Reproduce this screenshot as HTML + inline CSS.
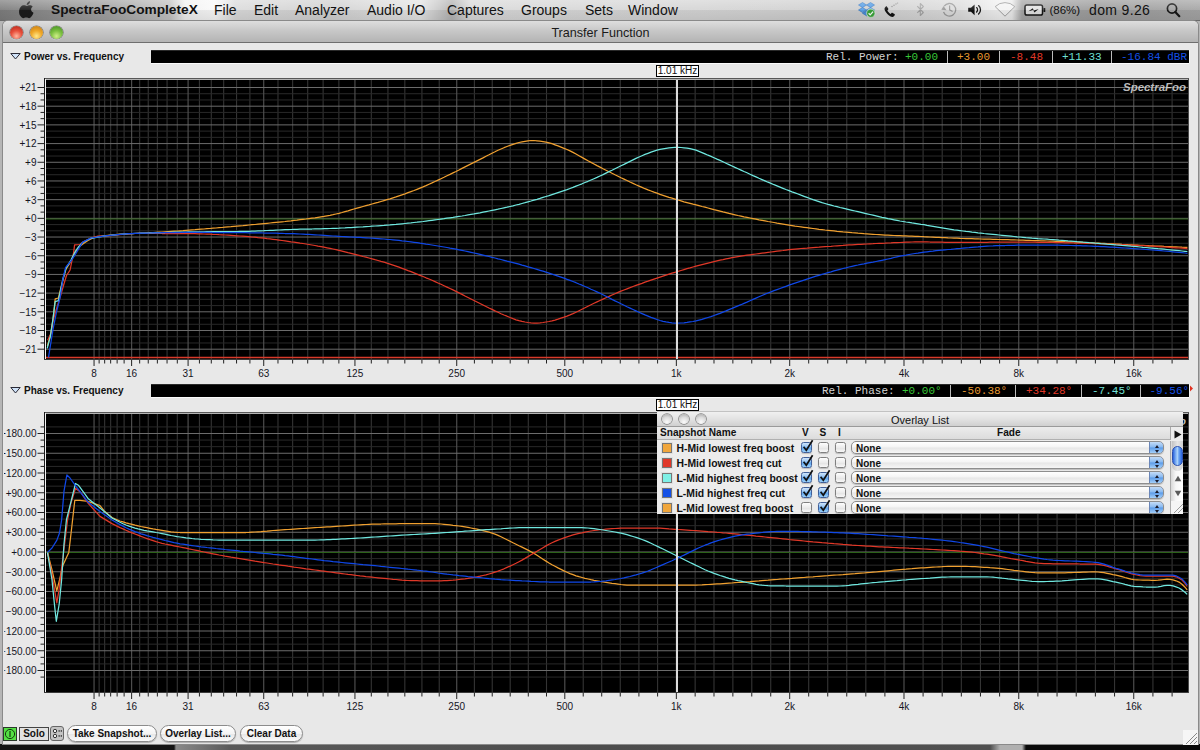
<!DOCTYPE html>
<html lang="en"><head><meta charset="utf-8"><title>Transfer Function</title>
<style>
html,body{margin:0;padding:0}
body{width:1200px;height:750px;position:relative;overflow:hidden;background:linear-gradient(90deg,#141414 0,#141414 174px,#8a8a8a 176px,#5a5a5a 230px,#4c4c4c 600px,#505050 990px,#b0b0b0 1000px,#b0b0b0 1022px,#0a0a0a 1026px,#0a0a0a 1200px);font-family:"Liberation Sans","DejaVu Sans",sans-serif;color:#111;-webkit-font-smoothing:antialiased}
div,span{position:absolute;box-sizing:border-box;white-space:nowrap}
svg{position:absolute;display:block}
.desk{left:0;top:0;width:1200px;height:744px;background:#b6b6b6}
.menubar{left:0;top:0;width:1200px;height:21px;background:linear-gradient(90deg,#7e7e7e 0,#8c8c8c 40px,#a4a4a4 110px,#c4c4c4 170px,#f2f2f2 185px,#fafafa 215px,#dcdcdc 235px,#d2d2d2 330px,#e6e6e6 420px,#c8c8c8 440px,#b4b4b4 452px,#dadada 470px,#d6d6d6 700px,#cfcfcf 860px,#dedede 960px,#f2f2f2 1000px,#ececec 1012px,#a8a8a8 1022px,#9e9e9e 1100px,#a6a6a6 1200px);border-bottom:1px solid #6a6a6a}
.menubar:after{content:"";position:absolute;left:0;top:0;width:100%;height:20px;background:linear-gradient(180deg,rgba(255,255,255,.28),rgba(255,255,255,.05) 50%,rgba(0,0,0,.06) 52%,rgba(0,0,0,.10))}
.mi{top:1px;font-size:14px;line-height:18px;color:#111;z-index:2}
.win{left:3px;top:21px;width:1195px;height:723px;background:#e8e8e8;border-radius:5px 5px 0 0;box-shadow:0 0 0 1px #8a8a8a}
.tbar{left:0;top:0;width:1195px;height:22px;border-radius:5px 5px 0 0;background:linear-gradient(180deg,#dedede 0,#c8c8c8 45%,#b4b4b4 100%);border-bottom:1px solid #6e6e6e}
.title{left:0;width:1195px;top:5px;text-align:center;font-size:12.6px;line-height:15px;color:#1a1a1a}
.tl{top:5px;width:13px;height:13px;border-radius:50%;box-shadow:0 0 0 .6px rgba(0,0,0,.45),0 1px 1px rgba(255,255,255,.6)}
.sec{font-size:10px;font-weight:bold;line-height:12px;color:#111}
.bar{left:151px;width:1038px;height:13px;background:#000;box-shadow:0 1px 0 #fbfbfb,1px 0 0 #f4f4f4;border-top:1px solid #2a2a2a}
.ro{font-family:"Liberation Mono","DejaVu Sans Mono",monospace;font-size:11px;line-height:13px;top:0}
.sep{top:0;width:1px;height:12px;background:#bcbcbc}
.plot{}
.ylc{left:4px;top:44px;width:32.500px;height:690px;overflow:hidden}
.yl{right:0;text-align:right;font-size:10px;line-height:13px;color:#15151f}
.xl{width:40px;text-align:center;font-size:10px;line-height:12px;color:#15151f}
.cur{left:656px;width:43px;height:12px;background:#fff;border:1px solid #000;font-size:10px;line-height:10px;text-align:center;color:#111}
.pill{top:725px;height:17px;border:1px solid #8c8c8c;border-radius:9px;background:linear-gradient(180deg,#fff 0,#f4f4f4 50%,#e6e6e6 52%,#fbfbfb 100%);font-size:10px;font-weight:bold;line-height:15px;text-align:center;color:#111;box-shadow:0 1px 1px rgba(0,0,0,.25)}

.ov{left:657px;top:411px;width:526px;height:103px;background:#ececec;overflow:hidden}
.ovt{left:0;top:0;width:526px;height:16px;background:linear-gradient(180deg,#f0f0f0,#e2e2e2 50%,#d0d0d0);border-bottom:1px solid #9a9a9a;border-top:1px solid #c2c2c2}
.ovt i{top:1.700px;width:10px;height:10px;border-radius:50%;background:radial-gradient(circle at 50% 80%,#fbfbfb,#dcdcdc 50%,#a0a0a0);box-shadow:0 0 0 .8px #808080;position:absolute}
.ovtt{left:0;width:526px;top:1px;text-align:center;font-size:11px;line-height:14px;color:#111}
.ovh{left:0;top:16px;width:526px;height:13px;background:linear-gradient(180deg,#ececec,#dcdcdc);border-bottom:1px solid #b0b0b0;font-size:10.100px;font-weight:bold;line-height:12px}
.ovh span{top:0}
.ovhb{left:513px;top:0;width:13px;height:13px;background:#ececec;border-left:1px solid #aaa}
.sw{left:4.500px;width:10px;height:10px;border:1px solid #777;box-shadow:0 0 0 1px #e0e0e0}
.rn{left:19.500px;font-size:10.400px;font-weight:bold;line-height:13px;color:#111}
.cb{width:11px;height:11px;border:1px solid #808080;border-radius:2.500px;background:linear-gradient(180deg,#fdfdfd,#ececec 50%,#e2e2e2 52%,#f8f8f8);box-shadow:0 1px 1px rgba(0,0,0,.2)}
.cb.on{border-color:#40609a;background:linear-gradient(180deg,#cfe4fa,#8cc0f4 48%,#5aa2ec 52%,#9ad0fa)}
.pop{left:194px;width:312.700px;height:13px;border:1px solid #8e8e8e;border-radius:5px;background:linear-gradient(180deg,#fff,#f4f4f4 48%,#e6e6e6 52%,#f6f6f6);box-shadow:0 1px 1px rgba(0,0,0,.2);font-size:10px;font-weight:bold;line-height:11px;overflow:hidden}
.pop span{left:4px;top:.700px}
.popc{right:-1px;top:-1px;width:15px;height:13px;border-radius:0 5px 5px 0;background:linear-gradient(180deg,#c4dcf8,#86b8f0 48%,#5a9ae8 52%,#a4d0fa);border:1px solid #6a86b8}
.sb{left:513px;top:30px;width:13px;height:73px;background:linear-gradient(90deg,#d8d8d8,#f6f6f6 40%,#fff);border-left:1px solid #aaa}
.sbtr{left:1px;top:0;width:11px;height:30px;border-radius:0 0 5.500px 5.500px;background:linear-gradient(90deg,#c4c4c4,#e4e4e4 50%,#d0d0d0)}
.sbth{left:1px;top:5px;width:11px;height:20px;border-radius:5.500px;background:linear-gradient(90deg,#2a62dc,#86b8f6 35%,#a8d0fa 50%,#6aa4f2 65%,#2a62dc);border:1px solid #2a50b0}
</style></head><body>
<div class="desk"></div>
<div class="menubar">
<svg style="left:19px;top:1px" width="16" height="19" viewBox="0 0 15 17.800"><path d="M10.4 0.2c.1 1-.3 1.900-.9 2.600-.6.700-1.500 1.200-2.400 1.100-.1-.9.300-1.900.9-2.500.6-.700 1.600-1.200 2.400-1.200zM13.600 12.300c-.4.900-.6 1.300-1.100 2.100-.7 1.100-1.700 2.500-3 2.500-1.100 0-1.400-.7-2.900-.7-1.500 0-1.900.7-3 .7-1.300 0-2.200-1.200-2.900-2.300C-1.300 11.600-.5 7.300 1.300 5.600c.9-.9 2-1.400 3.100-1.400 1.200 0 1.900.7 2.900.7.900 0 1.500-.7 2.900-.7 1 0 2 .5 2.800 1.400-2.400 1.400-2 4.900.6 5.700z" fill="#1c1c1c" transform="translate(.5,0) scale(.95)"/></svg>
<span class="mi" style="left:51px;font-weight:bold;font-size:13.7px">SpectraFooCompleteX</span>
<span class="mi" style="left:214px">File</span>
<span class="mi" style="left:254px">Edit</span>
<span class="mi" style="left:295px">Analyzer</span>
<span class="mi" style="left:367px">Audio I/O</span>
<span class="mi" style="left:447px">Captures</span>
<span class="mi" style="left:521px">Groups</span>
<span class="mi" style="left:585px">Sets</span>
<span class="mi" style="left:628px">Window</span>
<span class="mi" style="left:1049.500px;font-size:11.500px">(86%)</span>
<span class="mi" style="left:1089px;letter-spacing:.35px">dom 9.26</span>
<svg style="left:856px;top:0" width="350" height="21" viewBox="856 0 350 21">
<!-- dropbox -->
<g stroke="#2a6fc0" stroke-width=".6" fill="#5aa0e6">
<path d="M862.500 2.500l4 2.500-4 2.500-4-2.500z"/><path d="M870.500 2.500l4 2.500-4 2.500-4-2.500z"/>
<path d="M858.500 10l4-2.500 4 2.500-4 2.500z"/><path d="M866.500 10l4-2.500 4 2.500-4 2.500z"/>
<path d="M862.500 13.300l4-2.500 4 2.500-4 2.500z" fill="#4a90dc"/>
</g>
<circle cx="870.800" cy="13.200" r="4.200" fill="#3aa63a" stroke="#e8f4e8" stroke-width=".7"/>
<path d="M868.600 13.200l1.600 1.700 2.900-3.300" fill="none" stroke="#fff" stroke-width="1.300"/>
<!-- phone -->
<path d="M885.200 7.200c-.9.800-.9 2.200.1 4 1.200 2.100 3.200 4.300 5.300 5.300 1.500.7 2.600.5 3.300-.3l.8-1c.3-.4.200-.8-.2-1.100l-1.900-1.200c-.4-.2-.8-.2-1.100.2l-.7.800c-1.300-.6-2.800-2.100-3.500-3.500l.8-.7c.3-.3.400-.7.100-1.100l-1.200-1.900c-.3-.4-.7-.5-1.100-.2z" fill="#111"/>
<g fill="#8a8a8a"><circle cx="892" cy="6.500" r=".7"/><circle cx="894" cy="5.200" r=".7"/><circle cx="896" cy="3.900" r=".7"/><circle cx="897.600" cy="3" r=".6"/></g>
<!-- bluetooth -->
<path d="M917.300 6.200l6 6.300-3 3v-12l3 3-6 6.300" fill="none" stroke="#a4a4a4" stroke-width="1.100" stroke-linejoin="round"/>
<!-- time machine -->
<g fill="none" stroke="#9a9a9a" stroke-width="1.300"><path d="M944.200 6.200a6.300 6.300 0 1 1 -.7 5.800"/><path d="M949.600 5.500v4.300l3 1.700" stroke-width="1.200"/></g>
<path d="M941.300 9.800l5.200.4-2.900 -4.200z" fill="#9a9a9a"/>
<!-- volume -->
<path d="M968.200 7.800h2.800l3.600-3.400v10.800l-3.600-3.400h-2.800z" fill="#111"/>
<g fill="none" stroke="#111" stroke-width="1.300" stroke-linecap="round"><path d="M976.600 7.600a3 3 0 0 1 0 4.400"/><path d="M978.600 5.600a5.600 5.600 0 0 1 0 8.400"/></g>
<!-- wifi -->
<path d="M1005 16.200l-9.800-9.600a14 14 0 0 1 19.600 0z" fill="#f4f4f4" stroke="#a0a0a0" stroke-width="1" stroke-linejoin="round"/>
<!-- battery -->
<rect x="1025" y="5" width="17.500" height="10" rx="1.800" fill="#e4e4e4" stroke="#161616" stroke-width="1.500"/>
<rect x="1043.500" y="8" width="1.800" height="4" rx=".6" fill="#161616"/>
<path d="M1028.500 11.200l4.200-3 1.200 2.200 4.800-1.400-4.300 3.400-1.200-2.300z" fill="#161616"/>
<!-- spotlight -->
<circle cx="1172" cy="8.500" r="4.600" fill="none" stroke="#161616" stroke-width="1.700"/>
<path d="M1175.300 12l4 4.200" stroke="#161616" stroke-width="2.200" stroke-linecap="round"/>
</svg>

</div>
<div class="win">
 <div class="tbar">
  <div class="tl" style="left:7.300px;background:radial-gradient(circle at 50% 78%,#ffb8a0 0,#e8503c 45%,#b02418 100%)"></div>
  <div class="tl" style="left:27px;background:radial-gradient(circle at 50% 78%,#ffe88a 0,#f0a828 45%,#c07810 100%)"></div>
  <div class="tl" style="left:46.800px;background:radial-gradient(circle at 50% 78%,#d0f088 0,#7cc040 45%,#3c8820 100%)"></div>
  <div class="title">Transfer Function</div>
 </div>
</div>

<!-- section 1 header -->
<svg style="left:9px;top:52px" width="13" height="9" viewBox="0 0 13 9"><path d="M1.800 1.500H11.200L6.500 7z" fill="#cfe2f8" stroke="#2a2a36" stroke-width="1" stroke-linejoin="round"/></svg>
<div class="sec" style="left:24px;top:51px">Power vs. Frequency</div>
<div class="bar" style="top:50px">
 <span class="ro" style="left:675px;color:#d4d4d4">Rel. Power:</span>
 <span class="ro" style="left:754px;color:#38c838">+0.00</span>
 <span class="sep" style="left:796px"></span>
 <span class="ro" style="left:806px;color:#e89a30">+3.00</span>
 <span class="sep" style="left:848px"></span>
 <span class="ro" style="left:859px;color:#e03828">-8.48</span>
 <span class="sep" style="left:901px"></span>
 <span class="ro" style="left:911px;color:#70e0d8">+11.33</span>
 <span class="sep" style="left:960px"></span>
 <span class="ro" style="left:970px;color:#1450e8">-16.84 dBR</span>
</div>
<div class="cur" style="top:65px">1.01 kHz</div>

<!-- section 2 header -->
<svg style="left:9px;top:386px" width="13" height="9" viewBox="0 0 13 9"><path d="M1.800 1.500H11.200L6.500 7z" fill="#cfe2f8" stroke="#2a2a36" stroke-width="1" stroke-linejoin="round"/></svg>
<div class="sec" style="left:24px;top:385px">Phase vs. Frequency</div>
<div class="bar" style="top:384px;overflow:hidden">
 <span class="ro" style="left:671px;color:#d4d4d4">Rel. Phase:</span>
 <span class="ro" style="left:751px;color:#38c838">+0.00°</span>
 <span class="sep" style="left:799px"></span>
 <span class="ro" style="left:810px;color:#e89a30">-50.38°</span>
 <span class="sep" style="left:864px"></span>
 <span class="ro" style="left:875px;color:#e03828">+34.28°</span>
 <span class="sep" style="left:930px"></span>
 <span class="ro" style="left:941px;color:#70e0d8">-7.45°</span>
 <span class="sep" style="left:989px"></span>
 <span class="ro" style="left:998.500px;color:#1450e8">-9.56°</span>
</div>
<div class="cur" style="top:399px">1.01 kHz</div>
<svg style="left:1190px;top:385px" width="4" height="7" viewBox="0 0 4 7"><path d="M0 .5L3 3.500 0 6.500z" fill="#e03020"/></svg>

<svg class="plot" style="left:44px;top:78px" width="1145" height="282" viewBox="44 78 1145 282">
<rect x="44" y="78" width="1145" height="282" fill="#000"/>
<g stroke="#343434" stroke-width="1.1">
<line x1="99.13" y1="78" x2="99.13" y2="360"/>
<line x1="104.66" y1="78" x2="104.66" y2="360"/>
<line x1="110.65" y1="78" x2="110.65" y2="360"/>
<line x1="117.13" y1="78" x2="117.13" y2="360"/>
<line x1="124.11" y1="78" x2="124.11" y2="360"/>
<line x1="139.66" y1="78" x2="139.66" y2="360"/>
<line x1="148.24" y1="78" x2="148.24" y2="360"/>
<line x1="157.37" y1="78" x2="157.37" y2="360"/>
<line x1="167.06" y1="78" x2="167.06" y2="360"/>
<line x1="177.30" y1="78" x2="177.30" y2="360"/>
<line x1="199.43" y1="78" x2="199.43" y2="360"/>
<line x1="211.29" y1="78" x2="211.29" y2="360"/>
<line x1="223.67" y1="78" x2="223.67" y2="360"/>
<line x1="236.55" y1="78" x2="236.55" y2="360"/>
<line x1="249.91" y1="78" x2="249.91" y2="360"/>
<line x1="277.98" y1="78" x2="277.98" y2="360"/>
<line x1="292.64" y1="78" x2="292.64" y2="360"/>
<line x1="307.70" y1="78" x2="307.70" y2="360"/>
<line x1="323.12" y1="78" x2="323.12" y2="360"/>
<line x1="338.87" y1="78" x2="338.87" y2="360"/>
<line x1="371.31" y1="78" x2="371.31" y2="360"/>
<line x1="387.94" y1="78" x2="387.94" y2="360"/>
<line x1="404.82" y1="78" x2="404.82" y2="360"/>
<line x1="421.92" y1="78" x2="421.92" y2="360"/>
<line x1="439.23" y1="78" x2="439.23" y2="360"/>
<line x1="474.40" y1="78" x2="474.40" y2="360"/>
<line x1="492.23" y1="78" x2="492.23" y2="360"/>
<line x1="510.20" y1="78" x2="510.20" y2="360"/>
<line x1="528.29" y1="78" x2="528.29" y2="360"/>
<line x1="546.50" y1="78" x2="546.50" y2="360"/>
<line x1="583.22" y1="78" x2="583.22" y2="360"/>
<line x1="601.71" y1="78" x2="601.71" y2="360"/>
<line x1="620.27" y1="78" x2="620.27" y2="360"/>
<line x1="638.91" y1="78" x2="638.91" y2="360"/>
<line x1="657.60" y1="78" x2="657.60" y2="360"/>
<line x1="695.15" y1="78" x2="695.15" y2="360"/>
<line x1="713.99" y1="78" x2="713.99" y2="360"/>
<line x1="732.87" y1="78" x2="732.87" y2="360"/>
<line x1="751.78" y1="78" x2="751.78" y2="360"/>
<line x1="770.73" y1="78" x2="770.73" y2="360"/>
<line x1="808.70" y1="78" x2="808.70" y2="360"/>
<line x1="827.72" y1="78" x2="827.72" y2="360"/>
<line x1="846.76" y1="78" x2="846.76" y2="360"/>
<line x1="865.82" y1="78" x2="865.82" y2="360"/>
<line x1="884.90" y1="78" x2="884.90" y2="360"/>
<line x1="923.09" y1="78" x2="923.09" y2="360"/>
<line x1="942.20" y1="78" x2="942.20" y2="360"/>
<line x1="961.33" y1="78" x2="961.33" y2="360"/>
<line x1="980.46" y1="78" x2="980.46" y2="360"/>
<line x1="999.60" y1="78" x2="999.60" y2="360"/>
<line x1="1037.90" y1="78" x2="1037.90" y2="360"/>
<line x1="1057.06" y1="78" x2="1057.06" y2="360"/>
<line x1="1076.22" y1="78" x2="1076.22" y2="360"/>
<line x1="1095.39" y1="78" x2="1095.39" y2="360"/>
<line x1="1114.56" y1="78" x2="1114.56" y2="360"/>
<line x1="1152.92" y1="78" x2="1152.92" y2="360"/>
<line x1="1172.10" y1="78" x2="1172.10" y2="360"/>
</g><g stroke="#292929" stroke-width="1">
<line x1="44" y1="342.97" x2="1189" y2="342.97"/>
<line x1="44" y1="336.74" x2="1189" y2="336.74"/>
<line x1="44" y1="324.28" x2="1189" y2="324.28"/>
<line x1="44" y1="318.05" x2="1189" y2="318.05"/>
<line x1="44" y1="305.58" x2="1189" y2="305.58"/>
<line x1="44" y1="299.35" x2="1189" y2="299.35"/>
<line x1="44" y1="286.89" x2="1189" y2="286.89"/>
<line x1="44" y1="280.66" x2="1189" y2="280.66"/>
<line x1="44" y1="268.20" x2="1189" y2="268.20"/>
<line x1="44" y1="261.97" x2="1189" y2="261.97"/>
<line x1="44" y1="249.50" x2="1189" y2="249.50"/>
<line x1="44" y1="243.27" x2="1189" y2="243.27"/>
<line x1="44" y1="230.81" x2="1189" y2="230.81"/>
<line x1="44" y1="224.58" x2="1189" y2="224.58"/>
<line x1="44" y1="212.12" x2="1189" y2="212.12"/>
<line x1="44" y1="205.89" x2="1189" y2="205.89"/>
<line x1="44" y1="193.43" x2="1189" y2="193.43"/>
<line x1="44" y1="187.19" x2="1189" y2="187.19"/>
<line x1="44" y1="174.73" x2="1189" y2="174.73"/>
<line x1="44" y1="168.50" x2="1189" y2="168.50"/>
<line x1="44" y1="156.04" x2="1189" y2="156.04"/>
<line x1="44" y1="149.81" x2="1189" y2="149.81"/>
<line x1="44" y1="137.35" x2="1189" y2="137.35"/>
<line x1="44" y1="131.12" x2="1189" y2="131.12"/>
<line x1="44" y1="118.65" x2="1189" y2="118.65"/>
<line x1="44" y1="112.42" x2="1189" y2="112.42"/>
<line x1="44" y1="99.96" x2="1189" y2="99.96"/>
<line x1="44" y1="93.73" x2="1189" y2="93.73"/>
</g><g stroke="#505050" stroke-width="1.15">
<line x1="94.05" y1="78" x2="94.05" y2="360"/>
<line x1="131.62" y1="78" x2="131.62" y2="360"/>
<line x1="188.09" y1="78" x2="188.09" y2="360"/>
<line x1="263.72" y1="78" x2="263.72" y2="360"/>
<line x1="354.94" y1="78" x2="354.94" y2="360"/>
<line x1="456.73" y1="78" x2="456.73" y2="360"/>
<line x1="564.81" y1="78" x2="564.81" y2="360"/>
<line x1="676.35" y1="78" x2="676.35" y2="360"/>
<line x1="789.70" y1="78" x2="789.70" y2="360"/>
<line x1="903.99" y1="78" x2="903.99" y2="360"/>
<line x1="1018.75" y1="78" x2="1018.75" y2="360"/>
<line x1="1133.74" y1="78" x2="1133.74" y2="360"/>
</g><g stroke="#6c6c6c" stroke-width="1">
<line x1="44" y1="349.20" x2="1189" y2="349.20"/>
<line x1="44" y1="330.51" x2="1189" y2="330.51"/>
<line x1="44" y1="311.81" x2="1189" y2="311.81"/>
<line x1="44" y1="293.12" x2="1189" y2="293.12"/>
<line x1="44" y1="274.43" x2="1189" y2="274.43"/>
<line x1="44" y1="255.74" x2="1189" y2="255.74"/>
<line x1="44" y1="237.04" x2="1189" y2="237.04"/>
<line x1="44" y1="218.35" x2="1189" y2="218.35"/>
<line x1="44" y1="199.66" x2="1189" y2="199.66"/>
<line x1="44" y1="180.96" x2="1189" y2="180.96"/>
<line x1="44" y1="162.27" x2="1189" y2="162.27"/>
<line x1="44" y1="143.58" x2="1189" y2="143.58"/>
<line x1="44" y1="124.89" x2="1189" y2="124.89"/>
<line x1="44" y1="106.19" x2="1189" y2="106.19"/>
<line x1="44" y1="87.50" x2="1189" y2="87.50"/>
</g>
<line x1="44" y1="219.0" x2="1189" y2="219.0" stroke="#2c6219" stroke-width="1"/>
<line x1="44" y1="357.5" x2="1189" y2="357.5" stroke="#d83a2a" stroke-width="1.4"/><text x="1186" y="90.5" text-anchor="end" font-family='"Liberation Sans", "DejaVu Sans", sans-serif' font-size="10.5" font-weight="bold" font-style="italic" fill="#d4d4d4" fill-opacity=".88" letter-spacing="0" textLength="63" lengthAdjust="spacingAndGlyphs">SpectraFoo</text>
<g fill="none" stroke-width="1.25" stroke-linejoin="round">
<path d="M47.4,346.0 L50.5,335.0 L53.0,319.5 L55.2,298.9 L58.4,298.0 L61.1,287.0 L63.2,279.0 L66.0,269.0 L71.0,261.5 L75.0,253.0 L79.0,247.0 L83.5,243.5 L88.0,240.5 L94.5,237.2 L105.3,235.5 L120.0,234.1 L123.0,234.0 L126.0,233.8 L129.0,233.7 L132.0,233.6 L135.0,233.5 L138.0,233.3 L141.0,233.2 L144.0,233.1 L147.0,232.9 L150.0,232.7 L153.0,232.6 L156.0,232.4 L159.0,232.2 L162.0,232.0 L165.0,231.8 L168.0,231.6 L171.0,231.4 L174.0,231.2 L177.0,231.0 L180.0,230.8 L183.0,230.6 L186.0,230.3 L189.0,230.1 L192.0,229.9 L195.0,229.7 L198.0,229.4 L201.0,229.2 L204.0,229.0 L207.0,228.7 L210.0,228.5 L213.0,228.2 L216.0,228.0 L219.0,227.7 L222.0,227.5 L225.0,227.2 L228.0,226.9 L231.0,226.7 L234.0,226.4 L237.0,226.1 L240.0,225.8 L243.0,225.6 L246.0,225.3 L249.0,225.0 L252.0,224.7 L255.0,224.5 L258.0,224.2 L261.0,223.9 L264.0,223.6 L267.0,223.3 L270.0,223.0 L273.0,222.7 L276.0,222.4 L279.0,222.1 L282.0,221.8 L285.0,221.5 L288.0,221.1 L291.0,220.8 L294.0,220.4 L297.0,220.1 L300.0,219.7 L303.0,219.3 L306.0,219.0 L309.0,218.6 L312.0,218.2 L315.0,217.8 L318.0,217.3 L321.0,216.8 L324.0,216.4 L327.0,215.8 L330.0,215.3 L333.0,214.7 L336.0,214.0 L339.0,213.3 L342.0,212.5 L345.0,211.6 L348.0,210.8 L351.0,209.9 L354.0,209.0 L357.0,208.1 L360.0,207.3 L363.0,206.5 L366.0,205.7 L369.0,204.9 L372.0,204.0 L375.0,203.2 L378.0,202.4 L381.0,201.5 L384.0,200.6 L387.0,199.7 L390.0,198.8 L393.0,197.8 L396.0,196.9 L399.0,195.8 L402.0,194.8 L405.0,193.8 L408.0,192.7 L411.0,191.6 L414.0,190.5 L417.0,189.3 L420.0,188.1 L423.0,186.9 L426.0,185.6 L429.0,184.2 L432.0,182.9 L435.0,181.5 L438.0,180.1 L441.0,178.7 L444.0,177.3 L447.0,175.8 L450.0,174.4 L453.0,172.9 L456.0,171.5 L459.0,170.0 L462.0,168.4 L465.0,166.9 L468.0,165.4 L471.0,163.9 L474.0,162.4 L477.0,160.9 L480.0,159.4 L483.0,157.9 L486.0,156.3 L489.0,154.8 L492.0,153.2 L495.0,151.8 L498.0,150.3 L501.0,149.0 L504.0,147.7 L507.0,146.5 L510.0,145.4 L513.0,144.3 L516.0,143.3 L519.0,142.5 L522.0,141.9 L525.0,141.3 L528.0,140.8 L531.0,140.5 L534.0,140.5 L537.0,140.8 L540.0,141.2 L543.0,141.7 L546.0,142.2 L549.0,142.9 L552.0,143.7 L555.0,144.8 L558.0,145.9 L561.0,147.1 L564.0,148.3 L567.0,149.5 L570.0,150.9 L573.0,152.4 L576.0,154.0 L579.0,155.7 L582.0,157.4 L585.0,159.1 L588.0,160.8 L591.0,162.4 L594.0,164.0 L597.0,165.6 L600.0,167.1 L603.0,168.7 L606.0,170.2 L609.0,171.7 L612.0,173.3 L615.0,174.8 L618.0,176.2 L621.0,177.7 L624.0,179.1 L627.0,180.5 L630.0,182.0 L633.0,183.4 L636.0,184.8 L639.0,186.1 L642.0,187.4 L645.0,188.7 L648.0,189.9 L651.0,191.0 L654.0,192.2 L657.0,193.2 L660.0,194.3 L663.0,195.3 L666.0,196.3 L669.0,197.3 L672.0,198.2 L675.0,199.1 L678.0,200.0 L681.0,200.9 L684.0,201.8 L687.0,202.6 L690.0,203.4 L693.0,204.2 L696.0,204.9 L699.0,205.7 L702.0,206.5 L705.0,207.2 L708.0,208.0 L711.0,208.8 L714.0,209.6 L717.0,210.3 L720.0,211.1 L723.0,211.9 L726.0,212.6 L729.0,213.4 L732.0,214.1 L735.0,214.8 L738.0,215.5 L741.0,216.1 L744.0,216.8 L747.0,217.4 L750.0,218.0 L753.0,218.6 L756.0,219.2 L759.0,219.8 L762.0,220.3 L765.0,220.9 L768.0,221.5 L771.0,222.0 L774.0,222.5 L777.0,223.1 L780.0,223.6 L783.0,224.1 L786.0,224.6 L789.0,225.1 L792.0,225.6 L795.0,226.1 L798.0,226.5 L801.0,226.9 L804.0,227.3 L807.0,227.7 L810.0,228.1 L813.0,228.5 L816.0,228.9 L819.0,229.3 L822.0,229.6 L825.0,230.0 L828.0,230.3 L831.0,230.6 L834.0,230.9 L837.0,231.3 L840.0,231.6 L843.0,231.9 L846.0,232.1 L849.0,232.4 L852.0,232.7 L855.0,232.9 L858.0,233.2 L861.0,233.4 L864.0,233.7 L867.0,233.9 L870.0,234.1 L873.0,234.3 L876.0,234.5 L879.0,234.7 L882.0,234.9 L885.0,235.1 L888.0,235.2 L891.0,235.3 L894.0,235.5 L897.0,235.6 L900.0,235.7 L903.0,235.8 L906.0,235.9 L909.0,236.1 L912.0,236.2 L915.0,236.3 L918.0,236.4 L921.0,236.5 L924.0,236.7 L927.0,236.8 L930.0,237.0 L933.0,237.1 L936.0,237.3 L939.0,237.4 L942.0,237.6 L945.0,237.7 L948.0,237.9 L951.0,238.0 L954.0,238.1 L957.0,238.2 L960.0,238.4 L963.0,238.5 L966.0,238.6 L969.0,238.6 L972.0,238.7 L975.0,238.8 L978.0,238.9 L981.0,239.0 L984.0,239.1 L987.0,239.2 L990.0,239.2 L993.0,239.3 L996.0,239.4 L999.0,239.5 L1002.0,239.6 L1005.0,239.6 L1008.0,239.7 L1011.0,239.8 L1014.0,239.9 L1017.0,240.0 L1020.0,240.1 L1023.0,240.2 L1026.0,240.3 L1029.0,240.4 L1032.0,240.5 L1035.0,240.6 L1038.0,240.7 L1041.0,240.8 L1044.0,240.9 L1047.0,241.0 L1050.0,241.1 L1053.0,241.2 L1056.0,241.3 L1059.0,241.4 L1062.0,241.5 L1065.0,241.7 L1068.0,241.8 L1071.0,241.9 L1074.0,242.0 L1077.0,242.1 L1080.0,242.3 L1083.0,242.4 L1086.0,242.5 L1089.0,242.7 L1092.0,242.8 L1095.0,243.0 L1098.0,243.1 L1101.0,243.3 L1104.0,243.4 L1107.0,243.6 L1110.0,243.8 L1113.0,243.9 L1116.0,244.1 L1119.0,244.2 L1122.0,244.4 L1125.0,244.5 L1128.0,244.7 L1131.0,244.8 L1134.0,245.0 L1137.0,245.1 L1140.0,245.3 L1143.0,245.4 L1146.0,245.5 L1149.0,245.7 L1152.0,245.8 L1155.0,246.0 L1158.0,246.1 L1161.0,246.2 L1164.0,246.4 L1167.0,246.5 L1170.0,246.6 L1173.0,246.8 L1176.0,246.9 L1179.0,247.0 L1182.0,247.2 L1185.0,247.3 L1187.4,247.4" stroke="#f0a030"/>
<path d="M47.6,340.3 L51.2,333.0 L53.0,320.5 L55.7,311.5 L60.2,297.0 L63.8,284.5 L66.5,275.5 L70.1,270.0 L73.7,252.0 L74.6,244.8 L80.0,244.5 L82.7,242.1 L90.8,238.2 L98.0,236.0 L105.3,236.2 L120.0,234.6 L123.0,234.3 L126.0,234.1 L129.0,233.9 L132.0,233.7 L135.0,233.5 L138.0,233.4 L141.0,233.4 L144.0,233.4 L147.0,233.4 L150.0,233.4 L153.0,233.4 L156.0,233.4 L159.0,233.4 L162.0,233.5 L165.0,233.5 L168.0,233.5 L171.0,233.5 L174.0,233.5 L177.0,233.6 L180.0,233.6 L183.0,233.6 L186.0,233.6 L189.0,233.7 L192.0,233.7 L195.0,233.7 L198.0,233.8 L201.0,233.9 L204.0,234.0 L207.0,234.1 L210.0,234.2 L213.0,234.4 L216.0,234.5 L219.0,234.7 L222.0,234.8 L225.0,235.0 L228.0,235.2 L231.0,235.4 L234.0,235.6 L237.0,235.8 L240.0,236.0 L243.0,236.2 L246.0,236.4 L249.0,236.7 L252.0,237.0 L255.0,237.2 L258.0,237.6 L261.0,237.9 L264.0,238.2 L267.0,238.6 L270.0,238.9 L273.0,239.3 L276.0,239.7 L279.0,240.1 L282.0,240.5 L285.0,240.9 L288.0,241.3 L291.0,241.8 L294.0,242.2 L297.0,242.6 L300.0,243.1 L303.0,243.5 L306.0,244.0 L309.0,244.5 L312.0,245.0 L315.0,245.5 L318.0,246.1 L321.0,246.6 L324.0,247.2 L327.0,247.8 L330.0,248.4 L333.0,249.0 L336.0,249.7 L339.0,250.4 L342.0,251.1 L345.0,251.8 L348.0,252.6 L351.0,253.3 L354.0,254.1 L357.0,254.9 L360.0,255.7 L363.0,256.5 L366.0,257.2 L369.0,258.0 L372.0,258.8 L375.0,259.7 L378.0,260.5 L381.0,261.4 L384.0,262.2 L387.0,263.2 L390.0,264.1 L393.0,265.1 L396.0,266.1 L399.0,267.2 L402.0,268.3 L405.0,269.4 L408.0,270.6 L411.0,271.7 L414.0,272.9 L417.0,274.1 L420.0,275.3 L423.0,276.5 L426.0,277.8 L429.0,279.0 L432.0,280.3 L435.0,281.6 L438.0,283.0 L441.0,284.3 L444.0,285.7 L447.0,287.1 L450.0,288.5 L453.0,289.9 L456.0,291.4 L459.0,292.9 L462.0,294.4 L465.0,296.0 L468.0,297.5 L471.0,299.0 L474.0,300.5 L477.0,302.0 L480.0,303.5 L483.0,305.0 L486.0,306.5 L489.0,308.0 L492.0,309.4 L495.0,310.9 L498.0,312.3 L501.0,313.7 L504.0,315.0 L507.0,316.2 L510.0,317.5 L513.0,318.7 L516.0,319.8 L519.0,320.7 L522.0,321.4 L525.0,322.0 L528.0,322.5 L531.0,322.9 L534.0,323.2 L537.0,323.2 L540.0,322.9 L543.0,322.5 L546.0,322.0 L549.0,321.5 L552.0,320.9 L555.0,320.1 L558.0,319.2 L561.0,318.2 L564.0,317.2 L567.0,316.1 L570.0,314.9 L573.0,313.6 L576.0,312.2 L579.0,310.7 L582.0,309.2 L585.0,307.7 L588.0,306.2 L591.0,304.7 L594.0,303.3 L597.0,301.9 L600.0,300.5 L603.0,299.1 L606.0,297.7 L609.0,296.4 L612.0,295.0 L615.0,293.7 L618.0,292.4 L621.0,291.2 L624.0,290.0 L627.0,288.8 L630.0,287.7 L633.0,286.5 L636.0,285.4 L639.0,284.3 L642.0,283.3 L645.0,282.2 L648.0,281.2 L651.0,280.1 L654.0,279.1 L657.0,278.1 L660.0,277.1 L663.0,276.1 L666.0,275.1 L669.0,274.1 L672.0,273.2 L675.0,272.3 L678.0,271.4 L681.0,270.5 L684.0,269.6 L687.0,268.7 L690.0,267.9 L693.0,267.0 L696.0,266.2 L699.0,265.4 L702.0,264.6 L705.0,263.8 L708.0,263.1 L711.0,262.4 L714.0,261.6 L717.0,260.9 L720.0,260.2 L723.0,259.6 L726.0,258.9 L729.0,258.3 L732.0,257.7 L735.0,257.1 L738.0,256.6 L741.0,256.1 L744.0,255.6 L747.0,255.2 L750.0,254.8 L753.0,254.4 L756.0,254.0 L759.0,253.6 L762.0,253.2 L765.0,252.8 L768.0,252.4 L771.0,252.0 L774.0,251.6 L777.0,251.2 L780.0,250.8 L783.0,250.5 L786.0,250.1 L789.0,249.7 L792.0,249.4 L795.0,249.1 L798.0,248.8 L801.0,248.5 L804.0,248.3 L807.0,248.1 L810.0,247.8 L813.0,247.6 L816.0,247.4 L819.0,247.2 L822.0,246.9 L825.0,246.7 L828.0,246.5 L831.0,246.3 L834.0,246.0 L837.0,245.8 L840.0,245.6 L843.0,245.4 L846.0,245.1 L849.0,244.9 L852.0,244.8 L855.0,244.6 L858.0,244.4 L861.0,244.3 L864.0,244.1 L867.0,244.0 L870.0,243.8 L873.0,243.7 L876.0,243.5 L879.0,243.4 L882.0,243.3 L885.0,243.2 L888.0,243.0 L891.0,242.9 L894.0,242.7 L897.0,242.6 L900.0,242.5 L903.0,242.3 L906.0,242.2 L909.0,242.1 L912.0,242.0 L915.0,241.9 L918.0,241.9 L921.0,241.9 L924.0,241.9 L927.0,241.9 L930.0,242.0 L933.0,242.0 L936.0,242.1 L939.0,242.1 L942.0,242.2 L945.0,242.3 L948.0,242.3 L951.0,242.3 L954.0,242.4 L957.0,242.4 L960.0,242.4 L963.0,242.4 L966.0,242.4 L969.0,242.4 L972.0,242.4 L975.0,242.3 L978.0,242.3 L981.0,242.3 L984.0,242.3 L987.0,242.3 L990.0,242.2 L993.0,242.2 L996.0,242.2 L999.0,242.2 L1002.0,242.2 L1005.0,242.1 L1008.0,242.1 L1011.0,242.1 L1014.0,242.1 L1017.0,242.1 L1020.0,242.1 L1023.0,242.1 L1026.0,242.1 L1029.0,242.2 L1032.0,242.2 L1035.0,242.2 L1038.0,242.3 L1041.0,242.3 L1044.0,242.3 L1047.0,242.4 L1050.0,242.4 L1053.0,242.5 L1056.0,242.6 L1059.0,242.6 L1062.0,242.7 L1065.0,242.8 L1068.0,242.8 L1071.0,242.9 L1074.0,243.0 L1077.0,243.0 L1080.0,243.1 L1083.0,243.2 L1086.0,243.3 L1089.0,243.4 L1092.0,243.5 L1095.0,243.6 L1098.0,243.7 L1101.0,243.8 L1104.0,243.9 L1107.0,244.0 L1110.0,244.2 L1113.0,244.3 L1116.0,244.4 L1119.0,244.6 L1122.0,244.7 L1125.0,244.8 L1128.0,245.0 L1131.0,245.1 L1134.0,245.3 L1137.0,245.4 L1140.0,245.6 L1143.0,245.7 L1146.0,245.9 L1149.0,246.1 L1152.0,246.2 L1155.0,246.4 L1158.0,246.6 L1161.0,246.8 L1164.0,247.0 L1167.0,247.2 L1170.0,247.4 L1173.0,247.6 L1176.0,247.8 L1179.0,248.0 L1182.0,248.2 L1185.0,248.4 L1187.4,248.6" stroke="#e03828"/>
<path d="M47.2,348.4 L50.3,336.7 L53.0,318.7 L55.2,301.6 L58.4,300.7 L61.1,288.0 L62.9,279.0 L66.0,268.0 L71.0,260.0 L75.5,251.0 L78.0,247.5 L82.7,242.5 L90.8,238.3 L105.3,235.8 L120.0,234.3 L123.0,234.1 L126.0,233.9 L129.0,233.7 L132.0,233.6 L135.0,233.4 L138.0,233.3 L141.0,233.2 L144.0,233.1 L147.0,233.0 L150.0,232.9 L153.0,232.8 L156.0,232.7 L159.0,232.6 L162.0,232.5 L165.0,232.5 L168.0,232.4 L171.0,232.3 L174.0,232.2 L177.0,232.2 L180.0,232.1 L183.0,232.0 L186.0,232.0 L189.0,231.9 L192.0,231.9 L195.0,231.9 L198.0,231.8 L201.0,231.8 L204.0,231.8 L207.0,231.7 L210.0,231.7 L213.0,231.7 L216.0,231.7 L219.0,231.6 L222.0,231.6 L225.0,231.6 L228.0,231.6 L231.0,231.5 L234.0,231.5 L237.0,231.5 L240.0,231.4 L243.0,231.4 L246.0,231.3 L249.0,231.3 L252.0,231.2 L255.0,231.1 L258.0,230.9 L261.0,230.8 L264.0,230.7 L267.0,230.5 L270.0,230.4 L273.0,230.3 L276.0,230.1 L279.0,230.0 L282.0,229.8 L285.0,229.7 L288.0,229.6 L291.0,229.5 L294.0,229.4 L297.0,229.3 L300.0,229.2 L303.0,229.2 L306.0,229.1 L309.0,229.0 L312.0,229.0 L315.0,228.9 L318.0,228.8 L321.0,228.8 L324.0,228.7 L327.0,228.6 L330.0,228.5 L333.0,228.4 L336.0,228.3 L339.0,228.2 L342.0,228.0 L345.0,227.9 L348.0,227.7 L351.0,227.6 L354.0,227.4 L357.0,227.2 L360.0,227.0 L363.0,226.9 L366.0,226.7 L369.0,226.5 L372.0,226.2 L375.0,226.0 L378.0,225.8 L381.0,225.6 L384.0,225.4 L387.0,225.1 L390.0,224.9 L393.0,224.6 L396.0,224.4 L399.0,224.1 L402.0,223.8 L405.0,223.5 L408.0,223.2 L411.0,222.9 L414.0,222.5 L417.0,222.2 L420.0,221.8 L423.0,221.5 L426.0,221.1 L429.0,220.7 L432.0,220.3 L435.0,219.9 L438.0,219.5 L441.0,219.1 L444.0,218.7 L447.0,218.2 L450.0,217.8 L453.0,217.4 L456.0,216.9 L459.0,216.4 L462.0,216.0 L465.0,215.5 L468.0,214.9 L471.0,214.4 L474.0,213.9 L477.0,213.3 L480.0,212.8 L483.0,212.2 L486.0,211.6 L489.0,211.0 L492.0,210.4 L495.0,209.8 L498.0,209.2 L501.0,208.5 L504.0,207.8 L507.0,207.2 L510.0,206.5 L513.0,205.8 L516.0,205.0 L519.0,204.3 L522.0,203.5 L525.0,202.7 L528.0,201.8 L531.0,201.0 L534.0,200.1 L537.0,199.3 L540.0,198.4 L543.0,197.4 L546.0,196.5 L549.0,195.6 L552.0,194.6 L555.0,193.6 L558.0,192.6 L561.0,191.6 L564.0,190.6 L567.0,189.6 L570.0,188.5 L573.0,187.4 L576.0,186.2 L579.0,185.0 L582.0,183.8 L585.0,182.5 L588.0,181.3 L591.0,180.0 L594.0,178.7 L597.0,177.4 L600.0,176.0 L603.0,174.6 L606.0,173.1 L609.0,171.6 L612.0,170.2 L615.0,168.7 L618.0,167.2 L621.0,165.8 L624.0,164.4 L627.0,162.9 L630.0,161.4 L633.0,159.9 L636.0,158.4 L639.0,157.0 L642.0,155.7 L645.0,154.4 L648.0,153.3 L651.0,152.2 L654.0,151.2 L657.0,150.2 L660.0,149.4 L663.0,148.8 L666.0,148.3 L669.0,147.9 L672.0,147.6 L675.0,147.4 L678.0,147.3 L681.0,147.5 L684.0,147.8 L687.0,148.2 L690.0,148.7 L693.0,149.3 L696.0,150.2 L699.0,151.4 L702.0,152.6 L705.0,153.9 L708.0,155.2 L711.0,156.4 L714.0,157.7 L717.0,159.1 L720.0,160.4 L723.0,161.8 L726.0,163.2 L729.0,164.6 L732.0,166.0 L735.0,167.4 L738.0,168.7 L741.0,170.1 L744.0,171.5 L747.0,172.8 L750.0,174.2 L753.0,175.6 L756.0,176.9 L759.0,178.3 L762.0,179.6 L765.0,180.9 L768.0,182.2 L771.0,183.4 L774.0,184.7 L777.0,185.9 L780.0,187.1 L783.0,188.3 L786.0,189.5 L789.0,190.6 L792.0,191.8 L795.0,192.9 L798.0,194.0 L801.0,195.2 L804.0,196.3 L807.0,197.4 L810.0,198.5 L813.0,199.6 L816.0,200.6 L819.0,201.6 L822.0,202.6 L825.0,203.5 L828.0,204.4 L831.0,205.2 L834.0,206.0 L837.0,206.7 L840.0,207.5 L843.0,208.2 L846.0,208.9 L849.0,209.6 L852.0,210.3 L855.0,211.0 L858.0,211.7 L861.0,212.4 L864.0,213.1 L867.0,213.8 L870.0,214.5 L873.0,215.2 L876.0,215.9 L879.0,216.6 L882.0,217.3 L885.0,217.9 L888.0,218.6 L891.0,219.2 L894.0,219.8 L897.0,220.4 L900.0,221.0 L903.0,221.5 L906.0,222.0 L909.0,222.4 L912.0,222.9 L915.0,223.3 L918.0,223.8 L921.0,224.3 L924.0,224.7 L927.0,225.3 L930.0,225.8 L933.0,226.3 L936.0,226.8 L939.0,227.3 L942.0,227.8 L945.0,228.3 L948.0,228.8 L951.0,229.3 L954.0,229.8 L957.0,230.2 L960.0,230.6 L963.0,231.0 L966.0,231.4 L969.0,231.7 L972.0,232.1 L975.0,232.4 L978.0,232.8 L981.0,233.1 L984.0,233.5 L987.0,233.8 L990.0,234.1 L993.0,234.4 L996.0,234.7 L999.0,235.0 L1002.0,235.3 L1005.0,235.6 L1008.0,235.9 L1011.0,236.2 L1014.0,236.5 L1017.0,236.8 L1020.0,237.0 L1023.0,237.3 L1026.0,237.6 L1029.0,237.8 L1032.0,238.1 L1035.0,238.3 L1038.0,238.6 L1041.0,238.8 L1044.0,239.0 L1047.0,239.2 L1050.0,239.5 L1053.0,239.7 L1056.0,239.9 L1059.0,240.2 L1062.0,240.4 L1065.0,240.6 L1068.0,240.9 L1071.0,241.1 L1074.0,241.3 L1077.0,241.6 L1080.0,241.8 L1083.0,242.1 L1086.0,242.3 L1089.0,242.6 L1092.0,242.8 L1095.0,243.1 L1098.0,243.3 L1101.0,243.6 L1104.0,243.8 L1107.0,244.1 L1110.0,244.3 L1113.0,244.6 L1116.0,244.9 L1119.0,245.1 L1122.0,245.4 L1125.0,245.6 L1128.0,245.9 L1131.0,246.2 L1134.0,246.4 L1137.0,246.7 L1140.0,247.0 L1143.0,247.3 L1146.0,247.5 L1149.0,247.8 L1152.0,248.1 L1155.0,248.4 L1158.0,248.7 L1161.0,248.9 L1164.0,249.2 L1167.0,249.5 L1170.0,249.8 L1173.0,250.1 L1176.0,250.4 L1179.0,250.7 L1182.0,251.0 L1185.0,251.3 L1187.4,251.5" stroke="#70e8e0"/>
<path d="M48.5,357.4 L53.0,329.5 L56.6,311.5 L60.2,297.0 L62.9,279.0 L65.6,267.3 L71.0,261.0 L74.6,255.6 L80.0,246.6 L82.7,242.1 L90.8,238.0 L105.3,235.8 L120.0,234.3 L123.0,234.1 L126.0,233.9 L129.0,233.7 L132.0,233.6 L135.0,233.4 L138.0,233.3 L141.0,233.2 L144.0,233.1 L147.0,233.1 L150.0,233.0 L153.0,232.9 L156.0,232.8 L159.0,232.8 L162.0,232.7 L165.0,232.7 L168.0,232.6 L171.0,232.6 L174.0,232.5 L177.0,232.5 L180.0,232.5 L183.0,232.4 L186.0,232.4 L189.0,232.4 L192.0,232.4 L195.0,232.4 L198.0,232.4 L201.0,232.4 L204.0,232.4 L207.0,232.4 L210.0,232.4 L213.0,232.5 L216.0,232.5 L219.0,232.5 L222.0,232.5 L225.0,232.5 L228.0,232.6 L231.0,232.6 L234.0,232.6 L237.0,232.6 L240.0,232.7 L243.0,232.7 L246.0,232.7 L249.0,232.8 L252.0,232.8 L255.0,232.8 L258.0,232.9 L261.0,232.9 L264.0,233.0 L267.0,233.0 L270.0,233.1 L273.0,233.2 L276.0,233.2 L279.0,233.3 L282.0,233.4 L285.0,233.5 L288.0,233.5 L291.0,233.6 L294.0,233.7 L297.0,233.8 L300.0,234.0 L303.0,234.1 L306.0,234.3 L309.0,234.4 L312.0,234.6 L315.0,234.8 L318.0,235.0 L321.0,235.2 L324.0,235.4 L327.0,235.6 L330.0,235.8 L333.0,236.0 L336.0,236.1 L339.0,236.3 L342.0,236.5 L345.0,236.6 L348.0,236.8 L351.0,237.0 L354.0,237.1 L357.0,237.3 L360.0,237.4 L363.0,237.6 L366.0,237.8 L369.0,238.0 L372.0,238.2 L375.0,238.4 L378.0,238.6 L381.0,238.8 L384.0,239.0 L387.0,239.3 L390.0,239.5 L393.0,239.8 L396.0,240.1 L399.0,240.4 L402.0,240.8 L405.0,241.1 L408.0,241.5 L411.0,241.9 L414.0,242.3 L417.0,242.7 L420.0,243.2 L423.0,243.6 L426.0,244.1 L429.0,244.5 L432.0,245.0 L435.0,245.5 L438.0,246.0 L441.0,246.5 L444.0,247.0 L447.0,247.5 L450.0,248.1 L453.0,248.6 L456.0,249.2 L459.0,249.8 L462.0,250.4 L465.0,251.0 L468.0,251.6 L471.0,252.3 L474.0,253.0 L477.0,253.7 L480.0,254.4 L483.0,255.1 L486.0,255.8 L489.0,256.5 L492.0,257.3 L495.0,258.0 L498.0,258.8 L501.0,259.5 L504.0,260.3 L507.0,261.1 L510.0,261.8 L513.0,262.6 L516.0,263.4 L519.0,264.2 L522.0,265.1 L525.0,265.9 L528.0,266.8 L531.0,267.6 L534.0,268.5 L537.0,269.4 L540.0,270.3 L543.0,271.2 L546.0,272.2 L549.0,273.1 L552.0,274.1 L555.0,275.1 L558.0,276.1 L561.0,277.1 L564.0,278.2 L567.0,279.3 L570.0,280.4 L573.0,281.5 L576.0,282.7 L579.0,284.0 L582.0,285.2 L585.0,286.5 L588.0,287.8 L591.0,289.2 L594.0,290.5 L597.0,291.9 L600.0,293.3 L603.0,294.8 L606.0,296.3 L609.0,297.8 L612.0,299.4 L615.0,300.9 L618.0,302.3 L621.0,303.8 L624.0,305.2 L627.0,306.7 L630.0,308.1 L633.0,309.5 L636.0,310.9 L639.0,312.3 L642.0,313.6 L645.0,314.9 L648.0,316.1 L651.0,317.3 L654.0,318.4 L657.0,319.5 L660.0,320.5 L663.0,321.3 L666.0,321.9 L669.0,322.4 L672.0,322.8 L675.0,323.1 L678.0,323.2 L681.0,323.0 L684.0,322.8 L687.0,322.4 L690.0,321.9 L693.0,321.5 L696.0,320.9 L699.0,320.1 L702.0,319.3 L705.0,318.4 L708.0,317.5 L711.0,316.6 L714.0,315.5 L717.0,314.4 L720.0,313.3 L723.0,312.1 L726.0,310.9 L729.0,309.6 L732.0,308.4 L735.0,307.1 L738.0,305.9 L741.0,304.7 L744.0,303.4 L747.0,302.1 L750.0,300.7 L753.0,299.4 L756.0,298.1 L759.0,296.8 L762.0,295.5 L765.0,294.2 L768.0,293.0 L771.0,291.9 L774.0,290.7 L777.0,289.6 L780.0,288.5 L783.0,287.4 L786.0,286.3 L789.0,285.2 L792.0,284.2 L795.0,283.1 L798.0,282.1 L801.0,281.1 L804.0,280.1 L807.0,279.1 L810.0,278.1 L813.0,277.1 L816.0,276.2 L819.0,275.3 L822.0,274.4 L825.0,273.5 L828.0,272.6 L831.0,271.8 L834.0,270.9 L837.0,270.1 L840.0,269.3 L843.0,268.5 L846.0,267.8 L849.0,267.0 L852.0,266.3 L855.0,265.6 L858.0,265.0 L861.0,264.3 L864.0,263.8 L867.0,263.2 L870.0,262.6 L873.0,262.1 L876.0,261.5 L879.0,260.9 L882.0,260.3 L885.0,259.7 L888.0,259.0 L891.0,258.3 L894.0,257.5 L897.0,256.8 L900.0,256.2 L903.0,255.6 L906.0,255.1 L909.0,254.5 L912.0,254.0 L915.0,253.5 L918.0,253.1 L921.0,252.6 L924.0,252.2 L927.0,251.8 L930.0,251.4 L933.0,251.1 L936.0,250.7 L939.0,250.4 L942.0,250.1 L945.0,249.8 L948.0,249.5 L951.0,249.3 L954.0,249.0 L957.0,248.7 L960.0,248.5 L963.0,248.2 L966.0,247.9 L969.0,247.7 L972.0,247.4 L975.0,247.1 L978.0,246.9 L981.0,246.6 L984.0,246.4 L987.0,246.2 L990.0,246.0 L993.0,245.9 L996.0,245.7 L999.0,245.6 L1002.0,245.5 L1005.0,245.5 L1008.0,245.4 L1011.0,245.3 L1014.0,245.3 L1017.0,245.2 L1020.0,245.2 L1023.0,245.1 L1026.0,245.1 L1029.0,245.1 L1032.0,245.0 L1035.0,245.0 L1038.0,245.0 L1041.0,245.0 L1044.0,245.0 L1047.0,245.0 L1050.0,245.1 L1053.0,245.1 L1056.0,245.2 L1059.0,245.2 L1062.0,245.3 L1065.0,245.3 L1068.0,245.4 L1071.0,245.5 L1074.0,245.6 L1077.0,245.6 L1080.0,245.7 L1083.0,245.8 L1086.0,245.9 L1089.0,246.0 L1092.0,246.1 L1095.0,246.3 L1098.0,246.4 L1101.0,246.6 L1104.0,246.7 L1107.0,246.9 L1110.0,247.1 L1113.0,247.2 L1116.0,247.4 L1119.0,247.6 L1122.0,247.8 L1125.0,248.0 L1128.0,248.2 L1131.0,248.4 L1134.0,248.6 L1137.0,248.8 L1140.0,249.0 L1143.0,249.2 L1146.0,249.4 L1149.0,249.7 L1152.0,249.9 L1155.0,250.1 L1158.0,250.4 L1161.0,250.7 L1164.0,251.0 L1167.0,251.2 L1170.0,251.5 L1173.0,251.8 L1176.0,252.1 L1179.0,252.4 L1182.0,252.7 L1185.0,253.0 L1187.4,253.3" stroke="#1048e8"/>
</g>
<line x1="677" y1="78" x2="677" y2="360" stroke="#dcdcdc" stroke-width="2"/>
<line x1="44" y1="78.5" x2="1189" y2="78.5" stroke="#585858" stroke-width="1"/>
<line x1="45" y1="79.5" x2="1188" y2="79.5" stroke="#b4b4b4" stroke-width="1"/>
<line x1="44.5" y1="78" x2="44.5" y2="360" stroke="#1a1a1a" stroke-width="1"/>
<line x1="45.5" y1="79" x2="45.5" y2="359" stroke="#f4f4f4" stroke-width="1"/>
<line x1="44" y1="359.5" x2="1189" y2="359.5" stroke="#3a3a3a" stroke-width="1"/>
<line x1="1188.5" y1="79" x2="1188.5" y2="360" stroke="#4a4a4a" stroke-width="1"/>
</svg>
<svg class="plot" style="left:44px;top:412px" width="1145" height="281" viewBox="44 412 1145 281">
<rect x="44" y="412" width="1145" height="281" fill="#000"/>
<g stroke="#343434" stroke-width="1.1">
<line x1="99.13" y1="412" x2="99.13" y2="693"/>
<line x1="104.66" y1="412" x2="104.66" y2="693"/>
<line x1="110.65" y1="412" x2="110.65" y2="693"/>
<line x1="117.13" y1="412" x2="117.13" y2="693"/>
<line x1="124.11" y1="412" x2="124.11" y2="693"/>
<line x1="139.66" y1="412" x2="139.66" y2="693"/>
<line x1="148.24" y1="412" x2="148.24" y2="693"/>
<line x1="157.37" y1="412" x2="157.37" y2="693"/>
<line x1="167.06" y1="412" x2="167.06" y2="693"/>
<line x1="177.30" y1="412" x2="177.30" y2="693"/>
<line x1="199.43" y1="412" x2="199.43" y2="693"/>
<line x1="211.29" y1="412" x2="211.29" y2="693"/>
<line x1="223.67" y1="412" x2="223.67" y2="693"/>
<line x1="236.55" y1="412" x2="236.55" y2="693"/>
<line x1="249.91" y1="412" x2="249.91" y2="693"/>
<line x1="277.98" y1="412" x2="277.98" y2="693"/>
<line x1="292.64" y1="412" x2="292.64" y2="693"/>
<line x1="307.70" y1="412" x2="307.70" y2="693"/>
<line x1="323.12" y1="412" x2="323.12" y2="693"/>
<line x1="338.87" y1="412" x2="338.87" y2="693"/>
<line x1="371.31" y1="412" x2="371.31" y2="693"/>
<line x1="387.94" y1="412" x2="387.94" y2="693"/>
<line x1="404.82" y1="412" x2="404.82" y2="693"/>
<line x1="421.92" y1="412" x2="421.92" y2="693"/>
<line x1="439.23" y1="412" x2="439.23" y2="693"/>
<line x1="474.40" y1="412" x2="474.40" y2="693"/>
<line x1="492.23" y1="412" x2="492.23" y2="693"/>
<line x1="510.20" y1="412" x2="510.20" y2="693"/>
<line x1="528.29" y1="412" x2="528.29" y2="693"/>
<line x1="546.50" y1="412" x2="546.50" y2="693"/>
<line x1="583.22" y1="412" x2="583.22" y2="693"/>
<line x1="601.71" y1="412" x2="601.71" y2="693"/>
<line x1="620.27" y1="412" x2="620.27" y2="693"/>
<line x1="638.91" y1="412" x2="638.91" y2="693"/>
<line x1="657.60" y1="412" x2="657.60" y2="693"/>
<line x1="695.15" y1="412" x2="695.15" y2="693"/>
<line x1="713.99" y1="412" x2="713.99" y2="693"/>
<line x1="732.87" y1="412" x2="732.87" y2="693"/>
<line x1="751.78" y1="412" x2="751.78" y2="693"/>
<line x1="770.73" y1="412" x2="770.73" y2="693"/>
<line x1="808.70" y1="412" x2="808.70" y2="693"/>
<line x1="827.72" y1="412" x2="827.72" y2="693"/>
<line x1="846.76" y1="412" x2="846.76" y2="693"/>
<line x1="865.82" y1="412" x2="865.82" y2="693"/>
<line x1="884.90" y1="412" x2="884.90" y2="693"/>
<line x1="923.09" y1="412" x2="923.09" y2="693"/>
<line x1="942.20" y1="412" x2="942.20" y2="693"/>
<line x1="961.33" y1="412" x2="961.33" y2="693"/>
<line x1="980.46" y1="412" x2="980.46" y2="693"/>
<line x1="999.60" y1="412" x2="999.60" y2="693"/>
<line x1="1037.90" y1="412" x2="1037.90" y2="693"/>
<line x1="1057.06" y1="412" x2="1057.06" y2="693"/>
<line x1="1076.22" y1="412" x2="1076.22" y2="693"/>
<line x1="1095.39" y1="412" x2="1095.39" y2="693"/>
<line x1="1114.56" y1="412" x2="1114.56" y2="693"/>
<line x1="1152.92" y1="412" x2="1152.92" y2="693"/>
<line x1="1172.10" y1="412" x2="1172.10" y2="693"/>
</g><g stroke="#292929" stroke-width="1">
<line x1="44" y1="677.08" x2="1189" y2="677.08"/>
<line x1="44" y1="663.92" x2="1189" y2="663.92"/>
<line x1="44" y1="657.33" x2="1189" y2="657.33"/>
<line x1="44" y1="644.17" x2="1189" y2="644.17"/>
<line x1="44" y1="637.58" x2="1189" y2="637.58"/>
<line x1="44" y1="624.42" x2="1189" y2="624.42"/>
<line x1="44" y1="617.83" x2="1189" y2="617.83"/>
<line x1="44" y1="604.67" x2="1189" y2="604.67"/>
<line x1="44" y1="598.08" x2="1189" y2="598.08"/>
<line x1="44" y1="584.92" x2="1189" y2="584.92"/>
<line x1="44" y1="578.33" x2="1189" y2="578.33"/>
<line x1="44" y1="565.17" x2="1189" y2="565.17"/>
<line x1="44" y1="558.58" x2="1189" y2="558.58"/>
<line x1="44" y1="545.42" x2="1189" y2="545.42"/>
<line x1="44" y1="538.83" x2="1189" y2="538.83"/>
<line x1="44" y1="525.67" x2="1189" y2="525.67"/>
<line x1="44" y1="519.08" x2="1189" y2="519.08"/>
<line x1="44" y1="505.92" x2="1189" y2="505.92"/>
<line x1="44" y1="499.33" x2="1189" y2="499.33"/>
<line x1="44" y1="486.17" x2="1189" y2="486.17"/>
<line x1="44" y1="479.58" x2="1189" y2="479.58"/>
<line x1="44" y1="466.42" x2="1189" y2="466.42"/>
<line x1="44" y1="459.83" x2="1189" y2="459.83"/>
<line x1="44" y1="446.67" x2="1189" y2="446.67"/>
<line x1="44" y1="440.08" x2="1189" y2="440.08"/>
<line x1="44" y1="426.92" x2="1189" y2="426.92"/>
</g><g stroke="#505050" stroke-width="1.15">
<line x1="94.05" y1="412" x2="94.05" y2="693"/>
<line x1="131.62" y1="412" x2="131.62" y2="693"/>
<line x1="188.09" y1="412" x2="188.09" y2="693"/>
<line x1="263.72" y1="412" x2="263.72" y2="693"/>
<line x1="354.94" y1="412" x2="354.94" y2="693"/>
<line x1="456.73" y1="412" x2="456.73" y2="693"/>
<line x1="564.81" y1="412" x2="564.81" y2="693"/>
<line x1="676.35" y1="412" x2="676.35" y2="693"/>
<line x1="789.70" y1="412" x2="789.70" y2="693"/>
<line x1="903.99" y1="412" x2="903.99" y2="693"/>
<line x1="1018.75" y1="412" x2="1018.75" y2="693"/>
<line x1="1133.74" y1="412" x2="1133.74" y2="693"/>
</g><g stroke="#6c6c6c" stroke-width="1">
<line x1="44" y1="670.50" x2="1189" y2="670.50"/>
<line x1="44" y1="650.75" x2="1189" y2="650.75"/>
<line x1="44" y1="631.00" x2="1189" y2="631.00"/>
<line x1="44" y1="611.25" x2="1189" y2="611.25"/>
<line x1="44" y1="591.50" x2="1189" y2="591.50"/>
<line x1="44" y1="571.75" x2="1189" y2="571.75"/>
<line x1="44" y1="552.00" x2="1189" y2="552.00"/>
<line x1="44" y1="532.25" x2="1189" y2="532.25"/>
<line x1="44" y1="512.50" x2="1189" y2="512.50"/>
<line x1="44" y1="492.75" x2="1189" y2="492.75"/>
<line x1="44" y1="473.00" x2="1189" y2="473.00"/>
<line x1="44" y1="453.25" x2="1189" y2="453.25"/>
<line x1="44" y1="433.50" x2="1189" y2="433.50"/>
</g>
<line x1="44" y1="552.5" x2="1189" y2="552.5" stroke="#2c6219" stroke-width="1"/>
<text x="1186" y="424.5" text-anchor="end" font-family='"Liberation Sans", "DejaVu Sans", sans-serif' font-size="10.5" font-weight="bold" font-style="italic" fill="#d4d4d4" fill-opacity=".88" letter-spacing="0" textLength="63" lengthAdjust="spacingAndGlyphs">SpectraFoo</text>
<g fill="none" stroke-width="1.25" stroke-linejoin="round">
<path d="M47.5,552.4 L52.0,570.0 L56.8,590.8 L59.5,580.0 L62.8,565.6 L68.8,552.4 L71.2,532.0 L74.8,500.3 L80.0,500.3 L88.0,501.3 L100.0,505.6 L104.8,511.6 L112.0,517.6 L120.0,521.0 L123.0,521.9 L126.0,522.8 L129.0,523.6 L132.0,524.3 L135.0,525.1 L138.0,525.8 L141.0,526.5 L144.0,527.1 L147.0,527.7 L150.0,528.3 L153.0,528.9 L156.0,529.4 L159.0,529.8 L162.0,530.3 L165.0,530.8 L168.0,531.3 L171.0,531.8 L174.0,532.2 L177.0,532.4 L180.0,532.5 L183.0,532.5 L186.0,532.5 L189.0,532.5 L192.0,532.5 L195.0,532.5 L198.0,532.5 L201.0,532.5 L204.0,532.5 L207.0,532.5 L210.0,532.5 L213.0,532.5 L216.0,532.5 L219.0,532.5 L222.0,532.5 L225.0,532.5 L228.0,532.5 L231.0,532.5 L234.0,532.5 L237.0,532.5 L240.0,532.5 L243.0,532.5 L246.0,532.5 L249.0,532.4 L252.0,532.2 L255.0,532.0 L258.0,531.8 L261.0,531.6 L264.0,531.3 L267.0,531.1 L270.0,530.8 L273.0,530.5 L276.0,530.3 L279.0,530.1 L282.0,529.9 L285.0,529.7 L288.0,529.5 L291.0,529.3 L294.0,529.1 L297.0,528.9 L300.0,528.7 L303.0,528.5 L306.0,528.3 L309.0,528.1 L312.0,527.9 L315.0,527.7 L318.0,527.5 L321.0,527.3 L324.0,527.1 L327.0,526.9 L330.0,526.8 L333.0,526.6 L336.0,526.4 L339.0,526.2 L342.0,526.0 L345.0,525.8 L348.0,525.6 L351.0,525.4 L354.0,525.2 L357.0,525.0 L360.0,524.8 L363.0,524.6 L366.0,524.5 L369.0,524.3 L372.0,524.2 L375.0,524.1 L378.0,524.0 L381.0,524.0 L384.0,523.9 L387.0,523.9 L390.0,523.8 L393.0,523.8 L396.0,523.8 L399.0,523.7 L402.0,523.7 L405.0,523.6 L408.0,523.6 L411.0,523.6 L414.0,523.6 L417.0,523.5 L420.0,523.5 L423.0,523.5 L426.0,523.5 L429.0,523.5 L432.0,523.5 L435.0,523.6 L438.0,523.8 L441.0,524.0 L444.0,524.3 L447.0,524.6 L450.0,524.9 L453.0,525.3 L456.0,525.6 L459.0,526.0 L462.0,526.4 L465.0,526.9 L468.0,527.4 L471.0,528.0 L474.0,528.6 L477.0,529.2 L480.0,529.9 L483.0,530.6 L486.0,531.4 L489.0,532.2 L492.0,533.1 L495.0,534.2 L498.0,535.4 L501.0,536.8 L504.0,538.3 L507.0,539.8 L510.0,541.3 L513.0,542.8 L516.0,544.2 L519.0,545.7 L522.0,547.1 L525.0,548.6 L528.0,550.1 L531.0,551.7 L534.0,553.4 L537.0,555.2 L540.0,557.2 L543.0,559.2 L546.0,561.1 L549.0,563.0 L552.0,564.7 L555.0,566.3 L558.0,567.9 L561.0,569.4 L564.0,570.9 L567.0,572.3 L570.0,573.6 L573.0,574.7 L576.0,575.8 L579.0,576.7 L582.0,577.5 L585.0,578.3 L588.0,579.0 L591.0,579.7 L594.0,580.3 L597.0,580.8 L600.0,581.4 L603.0,581.8 L606.0,582.3 L609.0,582.8 L612.0,583.3 L615.0,583.7 L618.0,584.1 L621.0,584.5 L624.0,584.8 L627.0,585.1 L630.0,585.2 L633.0,585.2 L636.0,585.2 L639.0,585.2 L642.0,585.2 L645.0,585.2 L648.0,585.2 L651.0,585.2 L654.0,585.2 L657.0,585.2 L660.0,585.2 L663.0,585.2 L666.0,585.2 L669.0,585.2 L672.0,585.2 L675.0,585.2 L678.0,585.2 L681.0,585.2 L684.0,585.2 L687.0,585.2 L690.0,585.2 L693.0,585.2 L696.0,585.2 L699.0,585.0 L702.0,584.9 L705.0,584.7 L708.0,584.5 L711.0,584.3 L714.0,584.1 L717.0,583.9 L720.0,583.8 L723.0,583.6 L726.0,583.4 L729.0,583.2 L732.0,583.0 L735.0,582.7 L738.0,582.5 L741.0,582.3 L744.0,582.1 L747.0,581.8 L750.0,581.6 L753.0,581.3 L756.0,581.1 L759.0,580.9 L762.0,580.6 L765.0,580.4 L768.0,580.2 L771.0,579.9 L774.0,579.7 L777.0,579.5 L780.0,579.2 L783.0,579.0 L786.0,578.8 L789.0,578.6 L792.0,578.4 L795.0,578.1 L798.0,577.9 L801.0,577.7 L804.0,577.5 L807.0,577.2 L810.0,577.0 L813.0,576.8 L816.0,576.5 L819.0,576.3 L822.0,576.1 L825.0,575.9 L828.0,575.7 L831.0,575.4 L834.0,575.2 L837.0,575.0 L840.0,574.8 L843.0,574.6 L846.0,574.3 L849.0,574.1 L852.0,573.9 L855.0,573.7 L858.0,573.4 L861.0,573.2 L864.0,573.0 L867.0,572.7 L870.0,572.5 L873.0,572.2 L876.0,572.0 L879.0,571.7 L882.0,571.4 L885.0,571.1 L888.0,570.8 L891.0,570.5 L894.0,570.2 L897.0,569.9 L900.0,569.6 L903.0,569.3 L906.0,569.1 L909.0,568.8 L912.0,568.6 L915.0,568.3 L918.0,568.1 L921.0,567.9 L924.0,567.8 L927.0,567.6 L930.0,567.4 L933.0,567.2 L936.0,567.0 L939.0,566.8 L942.0,566.7 L945.0,566.5 L948.0,566.4 L951.0,566.3 L954.0,566.3 L957.0,566.3 L960.0,566.3 L963.0,566.3 L966.0,566.4 L969.0,566.5 L972.0,566.6 L975.0,566.7 L978.0,566.9 L981.0,567.1 L984.0,567.3 L987.0,567.4 L990.0,567.7 L993.0,567.9 L996.0,568.1 L999.0,568.4 L1002.0,568.7 L1005.0,569.1 L1008.0,569.5 L1011.0,569.9 L1014.0,570.3 L1017.0,570.6 L1020.0,571.0 L1023.0,571.4 L1026.0,571.8 L1029.0,572.2 L1032.0,572.5 L1035.0,572.7 L1038.0,572.8 L1041.0,572.8 L1044.0,572.8 L1047.0,572.8 L1050.0,572.8 L1053.0,572.8 L1056.0,572.8 L1059.0,572.8 L1062.0,572.8 L1065.0,572.8 L1068.0,572.7 L1071.0,572.7 L1074.0,572.5 L1077.0,572.4 L1080.0,572.3 L1083.0,572.2 L1086.0,572.1 L1089.0,572.0 L1092.0,571.9 L1095.0,571.9 L1098.0,572.0 L1101.0,572.3 L1104.0,572.7 L1107.0,573.3 L1110.0,573.9 L1113.0,574.6 L1116.0,575.2 L1119.0,575.8 L1122.0,576.6 L1125.0,577.5 L1128.0,578.3 L1131.0,579.1 L1134.0,579.6 L1137.0,579.8 L1140.0,580.0 L1143.0,580.1 L1146.0,580.2 L1149.0,580.2 L1152.0,580.3 L1155.0,580.3 L1158.0,580.1 L1161.0,579.8 L1164.0,579.5 L1167.0,579.2 L1170.0,579.3 L1173.0,579.8 L1176.0,580.8 L1179.0,582.1 L1182.0,584.2 L1185.0,587.2 L1187.2,589.8" stroke="#f0a030"/>
<path d="M47.5,552.4 L52.0,575.0 L56.8,602.8 L59.0,590.0 L61.6,568.0 L67.6,520.0 L71.0,503.0 L75.5,488.3 L80.8,492.4 L88.0,503.2 L100.0,516.4 L112.0,523.6 L120.0,527.6 L123.0,528.9 L126.0,530.3 L129.0,531.6 L132.0,532.8 L135.0,534.0 L138.0,535.2 L141.0,536.4 L144.0,537.5 L147.0,538.6 L150.0,539.7 L153.0,540.7 L156.0,541.7 L159.0,542.5 L162.0,543.3 L165.0,544.0 L168.0,544.6 L171.0,545.2 L174.0,545.8 L177.0,546.4 L180.0,547.0 L183.0,547.6 L186.0,548.2 L189.0,548.9 L192.0,549.5 L195.0,550.1 L198.0,550.7 L201.0,551.4 L204.0,552.0 L207.0,552.6 L210.0,553.2 L213.0,553.8 L216.0,554.4 L219.0,555.0 L222.0,555.5 L225.0,556.1 L228.0,556.6 L231.0,557.2 L234.0,557.7 L237.0,558.2 L240.0,558.7 L243.0,559.2 L246.0,559.7 L249.0,560.2 L252.0,560.7 L255.0,561.2 L258.0,561.6 L261.0,562.1 L264.0,562.6 L267.0,563.0 L270.0,563.5 L273.0,564.0 L276.0,564.4 L279.0,564.9 L282.0,565.3 L285.0,565.7 L288.0,566.2 L291.0,566.6 L294.0,567.1 L297.0,567.5 L300.0,567.9 L303.0,568.3 L306.0,568.8 L309.0,569.2 L312.0,569.6 L315.0,570.0 L318.0,570.4 L321.0,570.8 L324.0,571.2 L327.0,571.6 L330.0,572.0 L333.0,572.4 L336.0,572.8 L339.0,573.2 L342.0,573.6 L345.0,574.0 L348.0,574.4 L351.0,574.7 L354.0,575.1 L357.0,575.5 L360.0,575.9 L363.0,576.2 L366.0,576.6 L369.0,576.9 L372.0,577.2 L375.0,577.5 L378.0,577.8 L381.0,578.1 L384.0,578.4 L387.0,578.7 L390.0,579.0 L393.0,579.3 L396.0,579.5 L399.0,579.8 L402.0,580.1 L405.0,580.3 L408.0,580.5 L411.0,580.6 L414.0,580.7 L417.0,580.7 L420.0,580.8 L423.0,580.8 L426.0,580.8 L429.0,580.8 L432.0,580.8 L435.0,580.8 L438.0,580.8 L441.0,580.8 L444.0,580.7 L447.0,580.6 L450.0,580.4 L453.0,580.2 L456.0,579.9 L459.0,579.5 L462.0,579.1 L465.0,578.8 L468.0,578.4 L471.0,577.9 L474.0,577.4 L477.0,576.8 L480.0,576.2 L483.0,575.5 L486.0,574.8 L489.0,574.0 L492.0,573.2 L495.0,572.2 L498.0,571.2 L501.0,570.0 L504.0,568.8 L507.0,567.4 L510.0,566.1 L513.0,564.7 L516.0,563.3 L519.0,561.7 L522.0,560.1 L525.0,558.4 L528.0,556.6 L531.0,554.8 L534.0,553.1 L537.0,551.3 L540.0,549.5 L543.0,547.7 L546.0,545.9 L549.0,544.2 L552.0,542.7 L555.0,541.4 L558.0,540.2 L561.0,539.0 L564.0,537.8 L567.0,536.8 L570.0,535.8 L573.0,534.9 L576.0,534.1 L579.0,533.4 L582.0,532.8 L585.0,532.1 L588.0,531.5 L591.0,531.0 L594.0,530.5 L597.0,530.1 L600.0,529.7 L603.0,529.5 L606.0,529.2 L609.0,528.9 L612.0,528.7 L615.0,528.5 L618.0,528.3 L621.0,528.1 L624.0,528.0 L627.0,528.0 L630.0,528.0 L633.0,528.0 L636.0,528.0 L639.0,528.0 L642.0,528.0 L645.0,528.0 L648.0,528.0 L651.0,528.0 L654.0,528.0 L657.0,528.1 L660.0,528.2 L663.0,528.4 L666.0,528.6 L669.0,528.9 L672.0,529.1 L675.0,529.3 L678.0,529.5 L681.0,529.7 L684.0,529.9 L687.0,530.1 L690.0,530.3 L693.0,530.5 L696.0,530.7 L699.0,530.9 L702.0,531.1 L705.0,531.3 L708.0,531.6 L711.0,531.8 L714.0,532.0 L717.0,532.3 L720.0,532.5 L723.0,532.8 L726.0,533.0 L729.0,533.3 L732.0,533.6 L735.0,533.9 L738.0,534.2 L741.0,534.5 L744.0,534.8 L747.0,535.1 L750.0,535.4 L753.0,535.7 L756.0,536.1 L759.0,536.4 L762.0,536.7 L765.0,537.0 L768.0,537.3 L771.0,537.6 L774.0,537.9 L777.0,538.2 L780.0,538.5 L783.0,538.8 L786.0,539.1 L789.0,539.5 L792.0,539.8 L795.0,540.1 L798.0,540.4 L801.0,540.7 L804.0,541.0 L807.0,541.3 L810.0,541.6 L813.0,541.9 L816.0,542.1 L819.0,542.4 L822.0,542.7 L825.0,542.9 L828.0,543.2 L831.0,543.4 L834.0,543.7 L837.0,543.9 L840.0,544.1 L843.0,544.4 L846.0,544.6 L849.0,544.8 L852.0,545.1 L855.0,545.3 L858.0,545.5 L861.0,545.7 L864.0,545.9 L867.0,546.1 L870.0,546.2 L873.0,546.4 L876.0,546.6 L879.0,546.8 L882.0,546.9 L885.0,547.1 L888.0,547.2 L891.0,547.3 L894.0,547.5 L897.0,547.6 L900.0,547.8 L903.0,547.9 L906.0,548.0 L909.0,548.2 L912.0,548.3 L915.0,548.5 L918.0,548.6 L921.0,548.8 L924.0,549.0 L927.0,549.1 L930.0,549.3 L933.0,549.5 L936.0,549.6 L939.0,549.8 L942.0,550.0 L945.0,550.1 L948.0,550.3 L951.0,550.5 L954.0,550.7 L957.0,550.9 L960.0,551.2 L963.0,551.4 L966.0,551.6 L969.0,551.9 L972.0,552.2 L975.0,552.5 L978.0,552.9 L981.0,553.3 L984.0,553.8 L987.0,554.2 L990.0,554.7 L993.0,555.2 L996.0,555.7 L999.0,556.2 L1002.0,556.8 L1005.0,557.4 L1008.0,558.0 L1011.0,558.6 L1014.0,559.1 L1017.0,559.6 L1020.0,560.2 L1023.0,560.7 L1026.0,561.3 L1029.0,561.8 L1032.0,562.3 L1035.0,562.8 L1038.0,563.2 L1041.0,563.4 L1044.0,563.6 L1047.0,563.7 L1050.0,563.7 L1053.0,563.8 L1056.0,563.8 L1059.0,563.8 L1062.0,563.8 L1065.0,563.9 L1068.0,563.9 L1071.0,563.9 L1074.0,563.9 L1077.0,563.9 L1080.0,564.0 L1083.0,564.0 L1086.0,564.0 L1089.0,564.1 L1092.0,564.1 L1095.0,564.2 L1098.0,564.4 L1101.0,564.8 L1104.0,565.4 L1107.0,566.2 L1110.0,567.1 L1113.0,568.0 L1116.0,568.9 L1119.0,569.7 L1122.0,570.7 L1125.0,571.7 L1128.0,572.7 L1131.0,573.6 L1134.0,574.4 L1137.0,575.0 L1140.0,575.6 L1143.0,576.0 L1146.0,576.1 L1149.0,576.1 L1152.0,576.1 L1155.0,576.1 L1158.0,576.1 L1161.0,576.1 L1164.0,576.1 L1167.0,576.1 L1170.0,576.1 L1173.0,576.1 L1176.0,576.8 L1179.0,578.1 L1182.0,580.0 L1185.0,583.2 L1187.2,586.5" stroke="#e03828"/>
<path d="M47.5,552.4 L52.0,580.0 L54.4,604.0 L56.3,621.3 L59.2,604.0 L61.6,580.0 L64.0,544.0 L66.4,520.0 L71.2,500.8 L75.5,483.5 L78.4,485.2 L88.0,498.4 L100.0,508.0 L112.0,518.0 L120.0,522.3 L123.0,523.7 L126.0,525.0 L129.0,526.2 L132.0,527.2 L135.0,528.1 L138.0,528.9 L141.0,529.6 L144.0,530.3 L147.0,530.9 L150.0,531.4 L153.0,531.9 L156.0,532.5 L159.0,533.0 L162.0,533.6 L165.0,534.2 L168.0,534.8 L171.0,535.5 L174.0,536.0 L177.0,536.6 L180.0,537.0 L183.0,537.4 L186.0,537.8 L189.0,538.1 L192.0,538.5 L195.0,538.8 L198.0,539.0 L201.0,539.3 L204.0,539.5 L207.0,539.6 L210.0,539.7 L213.0,539.9 L216.0,540.0 L219.0,540.1 L222.0,540.1 L225.0,540.2 L228.0,540.2 L231.0,540.2 L234.0,540.2 L237.0,540.2 L240.0,540.2 L243.0,540.2 L246.0,540.2 L249.0,540.2 L252.0,540.2 L255.0,540.2 L258.0,540.2 L261.0,540.2 L264.0,540.2 L267.0,540.2 L270.0,540.2 L273.0,540.2 L276.0,540.2 L279.0,540.2 L282.0,540.2 L285.0,540.2 L288.0,540.2 L291.0,540.2 L294.0,540.2 L297.0,540.2 L300.0,540.2 L303.0,540.2 L306.0,540.2 L309.0,540.2 L312.0,540.2 L315.0,540.1 L318.0,540.0 L321.0,539.9 L324.0,539.8 L327.0,539.7 L330.0,539.6 L333.0,539.4 L336.0,539.3 L339.0,539.1 L342.0,538.9 L345.0,538.8 L348.0,538.6 L351.0,538.5 L354.0,538.3 L357.0,538.1 L360.0,538.0 L363.0,537.8 L366.0,537.6 L369.0,537.4 L372.0,537.2 L375.0,537.0 L378.0,536.8 L381.0,536.6 L384.0,536.4 L387.0,536.2 L390.0,536.0 L393.0,535.8 L396.0,535.6 L399.0,535.4 L402.0,535.2 L405.0,535.0 L408.0,534.8 L411.0,534.6 L414.0,534.5 L417.0,534.3 L420.0,534.1 L423.0,534.0 L426.0,533.8 L429.0,533.6 L432.0,533.5 L435.0,533.3 L438.0,533.1 L441.0,532.9 L444.0,532.7 L447.0,532.5 L450.0,532.3 L453.0,532.1 L456.0,531.9 L459.0,531.7 L462.0,531.5 L465.0,531.2 L468.0,531.0 L471.0,530.8 L474.0,530.6 L477.0,530.4 L480.0,530.1 L483.0,529.9 L486.0,529.7 L489.0,529.6 L492.0,529.4 L495.0,529.2 L498.0,529.0 L501.0,528.8 L504.0,528.5 L507.0,528.3 L510.0,528.1 L513.0,528.0 L516.0,527.8 L519.0,527.7 L522.0,527.6 L525.0,527.5 L528.0,527.5 L531.0,527.5 L534.0,527.5 L537.0,527.5 L540.0,527.5 L543.0,527.5 L546.0,527.5 L549.0,527.5 L552.0,527.5 L555.0,527.5 L558.0,527.5 L561.0,527.5 L564.0,527.5 L567.0,527.5 L570.0,527.5 L573.0,527.5 L576.0,527.5 L579.0,527.5 L582.0,527.6 L585.0,527.8 L588.0,528.0 L591.0,528.3 L594.0,528.7 L597.0,529.1 L600.0,529.5 L603.0,530.0 L606.0,530.5 L609.0,531.0 L612.0,531.5 L615.0,532.0 L618.0,532.6 L621.0,533.2 L624.0,533.9 L627.0,534.7 L630.0,535.6 L633.0,536.5 L636.0,537.4 L639.0,538.4 L642.0,539.5 L645.0,540.6 L648.0,541.9 L651.0,543.2 L654.0,544.7 L657.0,546.1 L660.0,547.6 L663.0,549.0 L666.0,550.5 L669.0,552.0 L672.0,553.5 L675.0,555.0 L678.0,556.5 L681.0,558.0 L684.0,559.5 L687.0,561.0 L690.0,562.5 L693.0,563.9 L696.0,565.4 L699.0,566.8 L702.0,568.3 L705.0,569.7 L708.0,571.0 L711.0,572.2 L714.0,573.4 L717.0,574.4 L720.0,575.5 L723.0,576.4 L726.0,577.4 L729.0,578.3 L732.0,579.1 L735.0,579.9 L738.0,580.6 L741.0,581.2 L744.0,581.8 L747.0,582.5 L750.0,583.1 L753.0,583.7 L756.0,584.3 L759.0,584.8 L762.0,585.2 L765.0,585.5 L768.0,585.7 L771.0,585.8 L774.0,585.8 L777.0,585.9 L780.0,585.9 L783.0,585.9 L786.0,586.0 L789.0,586.0 L792.0,586.0 L795.0,586.1 L798.0,586.1 L801.0,586.1 L804.0,586.2 L807.0,586.2 L810.0,586.2 L813.0,586.2 L816.0,586.2 L819.0,586.2 L822.0,586.2 L825.0,586.2 L828.0,586.2 L831.0,586.2 L834.0,586.2 L837.0,586.2 L840.0,586.0 L843.0,585.8 L846.0,585.6 L849.0,585.3 L852.0,584.9 L855.0,584.6 L858.0,584.3 L861.0,583.9 L864.0,583.6 L867.0,583.3 L870.0,583.0 L873.0,582.7 L876.0,582.5 L879.0,582.2 L882.0,581.9 L885.0,581.7 L888.0,581.4 L891.0,581.1 L894.0,580.8 L897.0,580.6 L900.0,580.3 L903.0,580.0 L906.0,579.8 L909.0,579.5 L912.0,579.3 L915.0,579.1 L918.0,578.9 L921.0,578.7 L924.0,578.5 L927.0,578.3 L930.0,578.1 L933.0,577.8 L936.0,577.6 L939.0,577.4 L942.0,577.2 L945.0,577.1 L948.0,577.0 L951.0,576.8 L954.0,576.8 L957.0,576.8 L960.0,576.8 L963.0,576.8 L966.0,576.8 L969.0,576.8 L972.0,576.8 L975.0,576.8 L978.0,576.8 L981.0,576.8 L984.0,576.8 L987.0,576.8 L990.0,577.0 L993.0,577.2 L996.0,577.5 L999.0,577.8 L1002.0,578.2 L1005.0,578.5 L1008.0,578.9 L1011.0,579.2 L1014.0,579.5 L1017.0,579.8 L1020.0,580.1 L1023.0,580.4 L1026.0,580.7 L1029.0,581.0 L1032.0,581.3 L1035.0,581.5 L1038.0,581.6 L1041.0,581.6 L1044.0,581.6 L1047.0,581.5 L1050.0,581.4 L1053.0,581.3 L1056.0,581.2 L1059.0,581.1 L1062.0,580.9 L1065.0,580.6 L1068.0,580.4 L1071.0,580.1 L1074.0,579.8 L1077.0,579.6 L1080.0,579.5 L1083.0,579.3 L1086.0,579.1 L1089.0,578.9 L1092.0,578.8 L1095.0,578.8 L1098.0,578.9 L1101.0,579.2 L1104.0,579.6 L1107.0,580.2 L1110.0,580.9 L1113.0,581.6 L1116.0,582.2 L1119.0,582.8 L1122.0,583.5 L1125.0,584.4 L1128.0,585.2 L1131.0,585.8 L1134.0,586.3 L1137.0,586.6 L1140.0,586.7 L1143.0,586.9 L1146.0,587.0 L1149.0,587.0 L1152.0,587.1 L1155.0,587.1 L1158.0,586.8 L1161.0,586.3 L1164.0,585.7 L1167.0,585.3 L1170.0,585.3 L1173.0,585.9 L1176.0,586.9 L1179.0,588.0 L1182.0,589.9 L1185.0,592.3 L1187.2,594.4" stroke="#70e8e0"/>
<path d="M47.5,552.4 L52.0,548.0 L56.8,540.4 L59.5,533.0 L61.6,520.0 L64.0,491.2 L66.9,474.9 L70.0,478.0 L76.0,486.4 L88.0,502.0 L100.0,511.6 L112.0,520.0 L120.0,524.6 L123.0,526.1 L126.0,527.7 L129.0,529.1 L132.0,530.4 L135.0,531.6 L138.0,532.7 L141.0,533.8 L144.0,534.7 L147.0,535.7 L150.0,536.5 L153.0,537.4 L156.0,538.2 L159.0,538.9 L162.0,539.7 L165.0,540.5 L168.0,541.2 L171.0,541.9 L174.0,542.6 L177.0,543.2 L180.0,543.8 L183.0,544.2 L186.0,544.7 L189.0,545.2 L192.0,545.6 L195.0,546.0 L198.0,546.4 L201.0,546.8 L204.0,547.1 L207.0,547.5 L210.0,547.8 L213.0,548.1 L216.0,548.5 L219.0,548.8 L222.0,549.1 L225.0,549.5 L228.0,549.8 L231.0,550.1 L234.0,550.4 L237.0,550.7 L240.0,551.1 L243.0,551.4 L246.0,551.6 L249.0,551.9 L252.0,552.2 L255.0,552.5 L258.0,552.8 L261.0,553.1 L264.0,553.4 L267.0,553.6 L270.0,553.9 L273.0,554.3 L276.0,554.6 L279.0,554.9 L282.0,555.2 L285.0,555.6 L288.0,555.9 L291.0,556.3 L294.0,556.7 L297.0,557.1 L300.0,557.5 L303.0,557.9 L306.0,558.3 L309.0,558.7 L312.0,559.0 L315.0,559.4 L318.0,559.8 L321.0,560.2 L324.0,560.6 L327.0,560.9 L330.0,561.2 L333.0,561.6 L336.0,561.9 L339.0,562.2 L342.0,562.5 L345.0,562.8 L348.0,563.1 L351.0,563.4 L354.0,563.7 L357.0,564.0 L360.0,564.3 L363.0,564.6 L366.0,564.8 L369.0,565.1 L372.0,565.4 L375.0,565.7 L378.0,566.0 L381.0,566.4 L384.0,566.7 L387.0,567.0 L390.0,567.3 L393.0,567.6 L396.0,567.9 L399.0,568.2 L402.0,568.5 L405.0,568.8 L408.0,569.2 L411.0,569.5 L414.0,569.8 L417.0,570.2 L420.0,570.5 L423.0,570.9 L426.0,571.2 L429.0,571.6 L432.0,572.0 L435.0,572.5 L438.0,573.0 L441.0,573.4 L444.0,573.8 L447.0,574.2 L450.0,574.5 L453.0,574.9 L456.0,575.2 L459.0,575.6 L462.0,575.9 L465.0,576.2 L468.0,576.6 L471.0,576.9 L474.0,577.2 L477.0,577.5 L480.0,577.7 L483.0,578.0 L486.0,578.3 L489.0,578.6 L492.0,578.8 L495.0,579.1 L498.0,579.3 L501.0,579.6 L504.0,579.8 L507.0,580.0 L510.0,580.2 L513.0,580.4 L516.0,580.6 L519.0,580.7 L522.0,580.9 L525.0,581.0 L528.0,581.2 L531.0,581.4 L534.0,581.5 L537.0,581.6 L540.0,581.8 L543.0,581.9 L546.0,581.9 L549.0,582.0 L552.0,582.0 L555.0,582.0 L558.0,582.0 L561.0,582.0 L564.0,582.0 L567.0,582.0 L570.0,582.0 L573.0,582.0 L576.0,582.0 L579.0,582.0 L582.0,582.0 L585.0,582.0 L588.0,582.0 L591.0,582.0 L594.0,581.9 L597.0,581.7 L600.0,581.5 L603.0,581.1 L606.0,580.8 L609.0,580.3 L612.0,579.9 L615.0,579.5 L618.0,579.0 L621.0,578.5 L624.0,577.9 L627.0,577.2 L630.0,576.5 L633.0,575.7 L636.0,574.9 L639.0,574.0 L642.0,573.1 L645.0,572.1 L648.0,571.0 L651.0,569.8 L654.0,568.5 L657.0,567.2 L660.0,565.9 L663.0,564.6 L666.0,563.3 L669.0,562.0 L672.0,560.7 L675.0,559.3 L678.0,557.9 L681.0,556.5 L684.0,555.1 L687.0,553.6 L690.0,552.1 L693.0,550.6 L696.0,549.1 L699.0,547.8 L702.0,546.5 L705.0,545.2 L708.0,544.1 L711.0,542.9 L714.0,541.9 L717.0,540.9 L720.0,540.0 L723.0,539.2 L726.0,538.4 L729.0,537.6 L732.0,536.9 L735.0,536.2 L738.0,535.6 L741.0,535.1 L744.0,534.6 L747.0,534.2 L750.0,533.9 L753.0,533.5 L756.0,533.1 L759.0,532.8 L762.0,532.5 L765.0,532.2 L768.0,531.9 L771.0,531.7 L774.0,531.5 L777.0,531.4 L780.0,531.3 L783.0,531.3 L786.0,531.3 L789.0,531.3 L792.0,531.3 L795.0,531.4 L798.0,531.4 L801.0,531.5 L804.0,531.6 L807.0,531.6 L810.0,531.7 L813.0,531.8 L816.0,531.9 L819.0,532.0 L822.0,532.1 L825.0,532.2 L828.0,532.3 L831.0,532.4 L834.0,532.6 L837.0,532.7 L840.0,532.8 L843.0,532.9 L846.0,533.1 L849.0,533.2 L852.0,533.4 L855.0,533.6 L858.0,533.7 L861.0,533.9 L864.0,534.1 L867.0,534.3 L870.0,534.5 L873.0,534.7 L876.0,534.9 L879.0,535.1 L882.0,535.3 L885.0,535.5 L888.0,535.8 L891.0,536.0 L894.0,536.2 L897.0,536.4 L900.0,536.6 L903.0,536.8 L906.0,537.0 L909.0,537.3 L912.0,537.5 L915.0,537.7 L918.0,538.0 L921.0,538.2 L924.0,538.5 L927.0,538.7 L930.0,539.0 L933.0,539.3 L936.0,539.6 L939.0,539.9 L942.0,540.2 L945.0,540.5 L948.0,540.8 L951.0,541.2 L954.0,541.6 L957.0,542.0 L960.0,542.5 L963.0,542.9 L966.0,543.4 L969.0,543.9 L972.0,544.4 L975.0,544.9 L978.0,545.4 L981.0,546.0 L984.0,546.6 L987.0,547.2 L990.0,547.9 L993.0,548.6 L996.0,549.3 L999.0,550.1 L1002.0,550.8 L1005.0,551.5 L1008.0,552.2 L1011.0,552.9 L1014.0,553.6 L1017.0,554.2 L1020.0,554.7 L1023.0,555.3 L1026.0,555.9 L1029.0,556.5 L1032.0,557.1 L1035.0,557.6 L1038.0,558.1 L1041.0,558.6 L1044.0,559.1 L1047.0,559.5 L1050.0,559.8 L1053.0,560.1 L1056.0,560.3 L1059.0,560.5 L1062.0,560.6 L1065.0,560.8 L1068.0,560.9 L1071.0,561.0 L1074.0,561.1 L1077.0,561.2 L1080.0,561.3 L1083.0,561.5 L1086.0,561.6 L1089.0,561.8 L1092.0,562.0 L1095.0,562.3 L1098.0,562.6 L1101.0,563.3 L1104.0,564.2 L1107.0,565.2 L1110.0,566.2 L1113.0,567.3 L1116.0,568.3 L1119.0,569.2 L1122.0,570.1 L1125.0,571.1 L1128.0,572.0 L1131.0,572.8 L1134.0,573.5 L1137.0,574.1 L1140.0,574.7 L1143.0,575.1 L1146.0,575.2 L1149.0,575.2 L1152.0,575.2 L1155.0,575.2 L1158.0,575.2 L1161.0,575.2 L1164.0,575.2 L1167.0,575.2 L1170.0,575.2 L1173.0,575.2 L1176.0,575.9 L1179.0,577.2 L1182.0,579.0 L1185.0,582.1 L1187.2,585.2" stroke="#1048e8"/>
</g>
<line x1="677" y1="412" x2="677" y2="693" stroke="#dcdcdc" stroke-width="2"/>
<line x1="44" y1="412.5" x2="1189" y2="412.5" stroke="#585858" stroke-width="1"/>
<line x1="45" y1="413.5" x2="1188" y2="413.5" stroke="#b4b4b4" stroke-width="1"/>
<line x1="44.5" y1="412" x2="44.5" y2="693" stroke="#1a1a1a" stroke-width="1"/>
<line x1="45.5" y1="413" x2="45.5" y2="692" stroke="#f4f4f4" stroke-width="1"/>
<line x1="44" y1="692.5" x2="1189" y2="692.5" stroke="#3a3a3a" stroke-width="1"/>
<line x1="1188.5" y1="413" x2="1188.5" y2="693" stroke="#4a4a4a" stroke-width="1"/>
</svg>
<svg class="axes" width="1200" height="750" viewBox="0 0 1200 750"><g stroke="#222" stroke-width="1">
<line x1="94.05" y1="360" x2="94.05" y2="366"/>
<line x1="99.13" y1="360" x2="99.13" y2="363.5"/>
<line x1="104.66" y1="360" x2="104.66" y2="363.5"/>
<line x1="110.65" y1="360" x2="110.65" y2="363.5"/>
<line x1="117.13" y1="360" x2="117.13" y2="363.5"/>
<line x1="124.11" y1="360" x2="124.11" y2="363.5"/>
<line x1="131.62" y1="360" x2="131.62" y2="366"/>
<line x1="139.66" y1="360" x2="139.66" y2="363.5"/>
<line x1="148.24" y1="360" x2="148.24" y2="363.5"/>
<line x1="157.37" y1="360" x2="157.37" y2="363.5"/>
<line x1="167.06" y1="360" x2="167.06" y2="363.5"/>
<line x1="177.30" y1="360" x2="177.30" y2="363.5"/>
<line x1="188.09" y1="360" x2="188.09" y2="366"/>
<line x1="199.43" y1="360" x2="199.43" y2="363.5"/>
<line x1="211.29" y1="360" x2="211.29" y2="363.5"/>
<line x1="223.67" y1="360" x2="223.67" y2="363.5"/>
<line x1="236.55" y1="360" x2="236.55" y2="363.5"/>
<line x1="249.91" y1="360" x2="249.91" y2="363.5"/>
<line x1="263.72" y1="360" x2="263.72" y2="366"/>
<line x1="277.98" y1="360" x2="277.98" y2="363.5"/>
<line x1="292.64" y1="360" x2="292.64" y2="363.5"/>
<line x1="307.70" y1="360" x2="307.70" y2="363.5"/>
<line x1="323.12" y1="360" x2="323.12" y2="363.5"/>
<line x1="338.87" y1="360" x2="338.87" y2="363.5"/>
<line x1="354.94" y1="360" x2="354.94" y2="366"/>
<line x1="371.31" y1="360" x2="371.31" y2="363.5"/>
<line x1="387.94" y1="360" x2="387.94" y2="363.5"/>
<line x1="404.82" y1="360" x2="404.82" y2="363.5"/>
<line x1="421.92" y1="360" x2="421.92" y2="363.5"/>
<line x1="439.23" y1="360" x2="439.23" y2="363.5"/>
<line x1="456.73" y1="360" x2="456.73" y2="366"/>
<line x1="474.40" y1="360" x2="474.40" y2="363.5"/>
<line x1="492.23" y1="360" x2="492.23" y2="363.5"/>
<line x1="510.20" y1="360" x2="510.20" y2="363.5"/>
<line x1="528.29" y1="360" x2="528.29" y2="363.5"/>
<line x1="546.50" y1="360" x2="546.50" y2="363.5"/>
<line x1="564.81" y1="360" x2="564.81" y2="366"/>
<line x1="583.22" y1="360" x2="583.22" y2="363.5"/>
<line x1="601.71" y1="360" x2="601.71" y2="363.5"/>
<line x1="620.27" y1="360" x2="620.27" y2="363.5"/>
<line x1="638.91" y1="360" x2="638.91" y2="363.5"/>
<line x1="657.60" y1="360" x2="657.60" y2="363.5"/>
<line x1="676.35" y1="360" x2="676.35" y2="366"/>
<line x1="695.15" y1="360" x2="695.15" y2="363.5"/>
<line x1="713.99" y1="360" x2="713.99" y2="363.5"/>
<line x1="732.87" y1="360" x2="732.87" y2="363.5"/>
<line x1="751.78" y1="360" x2="751.78" y2="363.5"/>
<line x1="770.73" y1="360" x2="770.73" y2="363.5"/>
<line x1="789.70" y1="360" x2="789.70" y2="366"/>
<line x1="808.70" y1="360" x2="808.70" y2="363.5"/>
<line x1="827.72" y1="360" x2="827.72" y2="363.5"/>
<line x1="846.76" y1="360" x2="846.76" y2="363.5"/>
<line x1="865.82" y1="360" x2="865.82" y2="363.5"/>
<line x1="884.90" y1="360" x2="884.90" y2="363.5"/>
<line x1="903.99" y1="360" x2="903.99" y2="366"/>
<line x1="923.09" y1="360" x2="923.09" y2="363.5"/>
<line x1="942.20" y1="360" x2="942.20" y2="363.5"/>
<line x1="961.33" y1="360" x2="961.33" y2="363.5"/>
<line x1="980.46" y1="360" x2="980.46" y2="363.5"/>
<line x1="999.60" y1="360" x2="999.60" y2="363.5"/>
<line x1="1018.75" y1="360" x2="1018.75" y2="366"/>
<line x1="1037.90" y1="360" x2="1037.90" y2="363.5"/>
<line x1="1057.06" y1="360" x2="1057.06" y2="363.5"/>
<line x1="1076.22" y1="360" x2="1076.22" y2="363.5"/>
<line x1="1095.39" y1="360" x2="1095.39" y2="363.5"/>
<line x1="1114.56" y1="360" x2="1114.56" y2="363.5"/>
<line x1="1133.74" y1="360" x2="1133.74" y2="366"/>
<line x1="1152.92" y1="360" x2="1152.92" y2="363.5"/>
<line x1="1172.10" y1="360" x2="1172.10" y2="363.5"/>
<line x1="94.05" y1="693" x2="94.05" y2="699"/>
<line x1="99.13" y1="693" x2="99.13" y2="696.5"/>
<line x1="104.66" y1="693" x2="104.66" y2="696.5"/>
<line x1="110.65" y1="693" x2="110.65" y2="696.5"/>
<line x1="117.13" y1="693" x2="117.13" y2="696.5"/>
<line x1="124.11" y1="693" x2="124.11" y2="696.5"/>
<line x1="131.62" y1="693" x2="131.62" y2="699"/>
<line x1="139.66" y1="693" x2="139.66" y2="696.5"/>
<line x1="148.24" y1="693" x2="148.24" y2="696.5"/>
<line x1="157.37" y1="693" x2="157.37" y2="696.5"/>
<line x1="167.06" y1="693" x2="167.06" y2="696.5"/>
<line x1="177.30" y1="693" x2="177.30" y2="696.5"/>
<line x1="188.09" y1="693" x2="188.09" y2="699"/>
<line x1="199.43" y1="693" x2="199.43" y2="696.5"/>
<line x1="211.29" y1="693" x2="211.29" y2="696.5"/>
<line x1="223.67" y1="693" x2="223.67" y2="696.5"/>
<line x1="236.55" y1="693" x2="236.55" y2="696.5"/>
<line x1="249.91" y1="693" x2="249.91" y2="696.5"/>
<line x1="263.72" y1="693" x2="263.72" y2="699"/>
<line x1="277.98" y1="693" x2="277.98" y2="696.5"/>
<line x1="292.64" y1="693" x2="292.64" y2="696.5"/>
<line x1="307.70" y1="693" x2="307.70" y2="696.5"/>
<line x1="323.12" y1="693" x2="323.12" y2="696.5"/>
<line x1="338.87" y1="693" x2="338.87" y2="696.5"/>
<line x1="354.94" y1="693" x2="354.94" y2="699"/>
<line x1="371.31" y1="693" x2="371.31" y2="696.5"/>
<line x1="387.94" y1="693" x2="387.94" y2="696.5"/>
<line x1="404.82" y1="693" x2="404.82" y2="696.5"/>
<line x1="421.92" y1="693" x2="421.92" y2="696.5"/>
<line x1="439.23" y1="693" x2="439.23" y2="696.5"/>
<line x1="456.73" y1="693" x2="456.73" y2="699"/>
<line x1="474.40" y1="693" x2="474.40" y2="696.5"/>
<line x1="492.23" y1="693" x2="492.23" y2="696.5"/>
<line x1="510.20" y1="693" x2="510.20" y2="696.5"/>
<line x1="528.29" y1="693" x2="528.29" y2="696.5"/>
<line x1="546.50" y1="693" x2="546.50" y2="696.5"/>
<line x1="564.81" y1="693" x2="564.81" y2="699"/>
<line x1="583.22" y1="693" x2="583.22" y2="696.5"/>
<line x1="601.71" y1="693" x2="601.71" y2="696.5"/>
<line x1="620.27" y1="693" x2="620.27" y2="696.5"/>
<line x1="638.91" y1="693" x2="638.91" y2="696.5"/>
<line x1="657.60" y1="693" x2="657.60" y2="696.5"/>
<line x1="676.35" y1="693" x2="676.35" y2="699"/>
<line x1="695.15" y1="693" x2="695.15" y2="696.5"/>
<line x1="713.99" y1="693" x2="713.99" y2="696.5"/>
<line x1="732.87" y1="693" x2="732.87" y2="696.5"/>
<line x1="751.78" y1="693" x2="751.78" y2="696.5"/>
<line x1="770.73" y1="693" x2="770.73" y2="696.5"/>
<line x1="789.70" y1="693" x2="789.70" y2="699"/>
<line x1="808.70" y1="693" x2="808.70" y2="696.5"/>
<line x1="827.72" y1="693" x2="827.72" y2="696.5"/>
<line x1="846.76" y1="693" x2="846.76" y2="696.5"/>
<line x1="865.82" y1="693" x2="865.82" y2="696.5"/>
<line x1="884.90" y1="693" x2="884.90" y2="696.5"/>
<line x1="903.99" y1="693" x2="903.99" y2="699"/>
<line x1="923.09" y1="693" x2="923.09" y2="696.5"/>
<line x1="942.20" y1="693" x2="942.20" y2="696.5"/>
<line x1="961.33" y1="693" x2="961.33" y2="696.5"/>
<line x1="980.46" y1="693" x2="980.46" y2="696.5"/>
<line x1="999.60" y1="693" x2="999.60" y2="696.5"/>
<line x1="1018.75" y1="693" x2="1018.75" y2="699"/>
<line x1="1037.90" y1="693" x2="1037.90" y2="696.5"/>
<line x1="1057.06" y1="693" x2="1057.06" y2="696.5"/>
<line x1="1076.22" y1="693" x2="1076.22" y2="696.5"/>
<line x1="1095.39" y1="693" x2="1095.39" y2="696.5"/>
<line x1="1114.56" y1="693" x2="1114.56" y2="696.5"/>
<line x1="1133.74" y1="693" x2="1133.74" y2="699"/>
<line x1="1152.92" y1="693" x2="1152.92" y2="696.5"/>
<line x1="1172.10" y1="693" x2="1172.10" y2="696.5"/>
<line x1="37.5" y1="349.20" x2="44" y2="349.20"/>
<line x1="40.5" y1="342.97" x2="44" y2="342.97"/>
<line x1="40.5" y1="336.74" x2="44" y2="336.74"/>
<line x1="37.5" y1="330.51" x2="44" y2="330.51"/>
<line x1="40.5" y1="324.28" x2="44" y2="324.28"/>
<line x1="40.5" y1="318.05" x2="44" y2="318.05"/>
<line x1="37.5" y1="311.81" x2="44" y2="311.81"/>
<line x1="40.5" y1="305.58" x2="44" y2="305.58"/>
<line x1="40.5" y1="299.35" x2="44" y2="299.35"/>
<line x1="37.5" y1="293.12" x2="44" y2="293.12"/>
<line x1="40.5" y1="286.89" x2="44" y2="286.89"/>
<line x1="40.5" y1="280.66" x2="44" y2="280.66"/>
<line x1="37.5" y1="274.43" x2="44" y2="274.43"/>
<line x1="40.5" y1="268.20" x2="44" y2="268.20"/>
<line x1="40.5" y1="261.97" x2="44" y2="261.97"/>
<line x1="37.5" y1="255.74" x2="44" y2="255.74"/>
<line x1="40.5" y1="249.50" x2="44" y2="249.50"/>
<line x1="40.5" y1="243.27" x2="44" y2="243.27"/>
<line x1="37.5" y1="237.04" x2="44" y2="237.04"/>
<line x1="40.5" y1="230.81" x2="44" y2="230.81"/>
<line x1="40.5" y1="224.58" x2="44" y2="224.58"/>
<line x1="37.5" y1="218.35" x2="44" y2="218.35"/>
<line x1="40.5" y1="212.12" x2="44" y2="212.12"/>
<line x1="40.5" y1="205.89" x2="44" y2="205.89"/>
<line x1="37.5" y1="199.66" x2="44" y2="199.66"/>
<line x1="40.5" y1="193.43" x2="44" y2="193.43"/>
<line x1="40.5" y1="187.19" x2="44" y2="187.19"/>
<line x1="37.5" y1="180.96" x2="44" y2="180.96"/>
<line x1="40.5" y1="174.73" x2="44" y2="174.73"/>
<line x1="40.5" y1="168.50" x2="44" y2="168.50"/>
<line x1="37.5" y1="162.27" x2="44" y2="162.27"/>
<line x1="40.5" y1="156.04" x2="44" y2="156.04"/>
<line x1="40.5" y1="149.81" x2="44" y2="149.81"/>
<line x1="37.5" y1="143.58" x2="44" y2="143.58"/>
<line x1="40.5" y1="137.35" x2="44" y2="137.35"/>
<line x1="40.5" y1="131.12" x2="44" y2="131.12"/>
<line x1="37.5" y1="124.88" x2="44" y2="124.88"/>
<line x1="40.5" y1="118.65" x2="44" y2="118.65"/>
<line x1="40.5" y1="112.42" x2="44" y2="112.42"/>
<line x1="37.5" y1="106.19" x2="44" y2="106.19"/>
<line x1="40.5" y1="99.96" x2="44" y2="99.96"/>
<line x1="40.5" y1="93.73" x2="44" y2="93.73"/>
<line x1="37.5" y1="87.50" x2="44" y2="87.50"/>
<line x1="40.5" y1="677.08" x2="44" y2="677.08"/>
<line x1="37.5" y1="670.50" x2="44" y2="670.50"/>
<line x1="40.5" y1="663.92" x2="44" y2="663.92"/>
<line x1="40.5" y1="657.33" x2="44" y2="657.33"/>
<line x1="37.5" y1="650.75" x2="44" y2="650.75"/>
<line x1="40.5" y1="644.17" x2="44" y2="644.17"/>
<line x1="40.5" y1="637.58" x2="44" y2="637.58"/>
<line x1="37.5" y1="631.00" x2="44" y2="631.00"/>
<line x1="40.5" y1="624.42" x2="44" y2="624.42"/>
<line x1="40.5" y1="617.83" x2="44" y2="617.83"/>
<line x1="37.5" y1="611.25" x2="44" y2="611.25"/>
<line x1="40.5" y1="604.67" x2="44" y2="604.67"/>
<line x1="40.5" y1="598.08" x2="44" y2="598.08"/>
<line x1="37.5" y1="591.50" x2="44" y2="591.50"/>
<line x1="40.5" y1="584.92" x2="44" y2="584.92"/>
<line x1="40.5" y1="578.33" x2="44" y2="578.33"/>
<line x1="37.5" y1="571.75" x2="44" y2="571.75"/>
<line x1="40.5" y1="565.17" x2="44" y2="565.17"/>
<line x1="40.5" y1="558.58" x2="44" y2="558.58"/>
<line x1="37.5" y1="552.00" x2="44" y2="552.00"/>
<line x1="40.5" y1="545.42" x2="44" y2="545.42"/>
<line x1="40.5" y1="538.83" x2="44" y2="538.83"/>
<line x1="37.5" y1="532.25" x2="44" y2="532.25"/>
<line x1="40.5" y1="525.67" x2="44" y2="525.67"/>
<line x1="40.5" y1="519.08" x2="44" y2="519.08"/>
<line x1="37.5" y1="512.50" x2="44" y2="512.50"/>
<line x1="40.5" y1="505.92" x2="44" y2="505.92"/>
<line x1="40.5" y1="499.33" x2="44" y2="499.33"/>
<line x1="37.5" y1="492.75" x2="44" y2="492.75"/>
<line x1="40.5" y1="486.17" x2="44" y2="486.17"/>
<line x1="40.5" y1="479.58" x2="44" y2="479.58"/>
<line x1="37.5" y1="473.00" x2="44" y2="473.00"/>
<line x1="40.5" y1="466.42" x2="44" y2="466.42"/>
<line x1="40.5" y1="459.83" x2="44" y2="459.83"/>
<line x1="37.5" y1="453.25" x2="44" y2="453.25"/>
<line x1="40.5" y1="446.67" x2="44" y2="446.67"/>
<line x1="40.5" y1="440.08" x2="44" y2="440.08"/>
<line x1="37.5" y1="433.50" x2="44" y2="433.50"/>
<line x1="40.5" y1="426.92" x2="44" y2="426.92"/>
</g></svg>
<div class="ylc">
<div class="yl" style="top:299.0px">−21</div>
<div class="yl" style="top:280.3px">−18</div>
<div class="yl" style="top:261.6px">−15</div>
<div class="yl" style="top:242.9px">−12</div>
<div class="yl" style="top:224.2px">−9</div>
<div class="yl" style="top:205.5px">−6</div>
<div class="yl" style="top:186.8px">−3</div>
<div class="yl" style="top:168.2px">+0</div>
<div class="yl" style="top:149.5px">+3</div>
<div class="yl" style="top:130.8px">+6</div>
<div class="yl" style="top:112.1px">+9</div>
<div class="yl" style="top:93.4px">+12</div>
<div class="yl" style="top:74.7px">+15</div>
<div class="yl" style="top:56.0px">+18</div>
<div class="yl" style="top:37.3px">+21</div>
<div class="yl" style="top:620.3px">−180.00</div>
<div class="yl" style="top:600.5px">−150.00</div>
<div class="yl" style="top:580.8px">−120.00</div>
<div class="yl" style="top:561.0px">−90.00</div>
<div class="yl" style="top:541.3px">−60.00</div>
<div class="yl" style="top:521.5px">−30.00</div>
<div class="yl" style="top:501.8px">+0.00</div>
<div class="yl" style="top:482.0px">+30.00</div>
<div class="yl" style="top:462.3px">+60.00</div>
<div class="yl" style="top:442.6px">+90.00</div>
<div class="yl" style="top:422.8px">+120.00</div>
<div class="yl" style="top:403.1px">+150.00</div>
<div class="yl" style="top:383.3px">+180.00</div>
</div>
<div class="xl" style="left:74.0px;top:367.5px">8</div>
<div class="xl" style="left:111.6px;top:367.5px">16</div>
<div class="xl" style="left:168.1px;top:367.5px">31</div>
<div class="xl" style="left:243.7px;top:367.5px">63</div>
<div class="xl" style="left:334.9px;top:367.5px">125</div>
<div class="xl" style="left:436.7px;top:367.5px">250</div>
<div class="xl" style="left:544.8px;top:367.5px">500</div>
<div class="xl" style="left:656.3px;top:367.5px">1k</div>
<div class="xl" style="left:769.7px;top:367.5px">2k</div>
<div class="xl" style="left:884.0px;top:367.5px">4k</div>
<div class="xl" style="left:998.7px;top:367.5px">8k</div>
<div class="xl" style="left:1113.7px;top:367.5px">16k</div>
<div class="xl" style="left:74.0px;top:700.5px">8</div>
<div class="xl" style="left:111.6px;top:700.5px">16</div>
<div class="xl" style="left:168.1px;top:700.5px">31</div>
<div class="xl" style="left:243.7px;top:700.5px">63</div>
<div class="xl" style="left:334.9px;top:700.5px">125</div>
<div class="xl" style="left:436.7px;top:700.5px">250</div>
<div class="xl" style="left:544.8px;top:700.5px">500</div>
<div class="xl" style="left:656.3px;top:700.5px">1k</div>
<div class="xl" style="left:769.7px;top:700.5px">2k</div>
<div class="xl" style="left:884.0px;top:700.5px">4k</div>
<div class="xl" style="left:998.7px;top:700.5px">8k</div>
<div class="xl" style="left:1113.7px;top:700.5px">16k</div>

<div class="ov">
<div class="ovt"><i style="left:5px"></i><i style="left:22px"></i><i style="left:39px"></i><div class="ovtt">Overlay List</div></div>
<div class="ovh"><span style="left:3px">Snapshot Name</span><span style="left:145px">V</span><span style="left:162.500px">S</span><span style="left:181px">I</span><span style="left:340px">Fade</span><div class="ovhb"><svg style="left:3px;top:2.500px" width="8" height="9" viewBox="0 0 8 9"><path d="M.5.5L7.500 4.500.5 8.500z" fill="#111"/></svg></div></div>
<div class="sw" style="top:31.5px;background:#f0a63c"></div>
<span class="rn" style="top:30.7px">H-Mid lowest freq boost</span>
<div class="cb on" style="left:144px;top:31.0px"></div><svg style="left:144px;top:28.0px" width="14" height="14" viewBox="0 0 14 14"><path d="M2.600 7.800l2.700 3.400L11.600 1.200" fill="none" stroke="#111" stroke-width="1.700" stroke-linejoin="miter"/></svg>
<div class="cb" style="left:161px;top:31.0px"></div>
<div class="cb" style="left:177.5px;top:31.0px"></div>
<div class="pop" style="top:30.0px"><span>None</span><div class="popc"><svg style="left:4.500px;top:1.500px" width="6" height="10" viewBox="0 0 6 10"><path d="M3 1L5 3.900H1zM3 9L1 6.100H5z" fill="#1a1a2a"/></svg></div></div>
<div class="sw" style="top:46.5px;background:#e0382a"></div>
<span class="rn" style="top:45.7px">H-Mid lowest freq cut</span>
<div class="cb on" style="left:144px;top:46.0px"></div><svg style="left:144px;top:43.0px" width="14" height="14" viewBox="0 0 14 14"><path d="M2.600 7.800l2.700 3.400L11.600 1.200" fill="none" stroke="#111" stroke-width="1.700" stroke-linejoin="miter"/></svg>
<div class="cb" style="left:161px;top:46.0px"></div>
<div class="cb" style="left:177.5px;top:46.0px"></div>
<div class="pop" style="top:45.0px"><span>None</span><div class="popc"><svg style="left:4.500px;top:1.500px" width="6" height="10" viewBox="0 0 6 10"><path d="M3 1L5 3.900H1zM3 9L1 6.100H5z" fill="#1a1a2a"/></svg></div></div>
<div class="sw" style="top:61.5px;background:#7ef0e6"></div>
<span class="rn" style="top:60.7px">L-Mid highest freq boost</span>
<div class="cb on" style="left:144px;top:61.0px"></div><svg style="left:144px;top:58.0px" width="14" height="14" viewBox="0 0 14 14"><path d="M2.600 7.800l2.700 3.400L11.600 1.200" fill="none" stroke="#111" stroke-width="1.700" stroke-linejoin="miter"/></svg>
<div class="cb on" style="left:161px;top:61.0px"></div><svg style="left:161px;top:58.0px" width="14" height="14" viewBox="0 0 14 14"><path d="M2.600 7.800l2.700 3.400L11.600 1.200" fill="none" stroke="#111" stroke-width="1.700" stroke-linejoin="miter"/></svg>
<div class="cb" style="left:177.5px;top:61.0px"></div>
<div class="pop" style="top:60.0px"><span>None</span><div class="popc"><svg style="left:4.500px;top:1.500px" width="6" height="10" viewBox="0 0 6 10"><path d="M3 1L5 3.900H1zM3 9L1 6.100H5z" fill="#1a1a2a"/></svg></div></div>
<div class="sw" style="top:76.5px;background:#1450e6"></div>
<span class="rn" style="top:75.7px">L-Mid highest freq cut</span>
<div class="cb on" style="left:144px;top:76.0px"></div><svg style="left:144px;top:73.0px" width="14" height="14" viewBox="0 0 14 14"><path d="M2.600 7.800l2.700 3.400L11.600 1.200" fill="none" stroke="#111" stroke-width="1.700" stroke-linejoin="miter"/></svg>
<div class="cb on" style="left:161px;top:76.0px"></div><svg style="left:161px;top:73.0px" width="14" height="14" viewBox="0 0 14 14"><path d="M2.600 7.800l2.700 3.400L11.600 1.200" fill="none" stroke="#111" stroke-width="1.700" stroke-linejoin="miter"/></svg>
<div class="cb" style="left:177.5px;top:76.0px"></div>
<div class="pop" style="top:75.0px"><span>None</span><div class="popc"><svg style="left:4.500px;top:1.500px" width="6" height="10" viewBox="0 0 6 10"><path d="M3 1L5 3.900H1zM3 9L1 6.100H5z" fill="#1a1a2a"/></svg></div></div>
<div class="sw" style="top:91.5px;background:#f0a63c"></div>
<span class="rn" style="top:90.7px">L-Mid lowest freq boost</span>
<div class="cb" style="left:144px;top:91.0px"></div>
<div class="cb on" style="left:161px;top:91.0px"></div><svg style="left:161px;top:88.0px" width="14" height="14" viewBox="0 0 14 14"><path d="M2.600 7.800l2.700 3.400L11.600 1.200" fill="none" stroke="#111" stroke-width="1.700" stroke-linejoin="miter"/></svg>
<div class="cb" style="left:177.5px;top:91.0px"></div>
<div class="pop" style="top:90.0px"><span>None</span><div class="popc"><svg style="left:4.500px;top:1.500px" width="6" height="10" viewBox="0 0 6 10"><path d="M3 1L5 3.900H1zM3 9L1 6.100H5z" fill="#1a1a2a"/></svg></div></div>
<div class="sb"><div class="sbtr"></div><div class="sbth"></div><svg style="left:3px;top:34px" width="8" height="7" viewBox="0 0 8 7"><path d="M4 .8L7.300 6.200H.7z" fill="#5a5a5a"/></svg><svg style="left:3px;top:49px" width="8" height="7" viewBox="0 0 8 7"><path d="M4 6.200L7.300 .8H.7z" fill="#5a5a5a"/></svg><svg style="left:0;top:60px" width="13" height="13" viewBox="0 0 13 13"><rect width="13" height="13" fill="#f4f4f4"/><g stroke="#999" stroke-width="1"><line x1="3" y1="12" x2="12" y2="3"/><line x1="7" y1="12" x2="12" y2="7"/></g></svg></div>
</div>

<!-- bottom buttons -->
<div style="left:3px;top:727px;width:14px;height:14px;background:#54e044;border:1px solid #2a3a2a"><svg style="left:0;top:0" width="12" height="12" viewBox="0 0 12 12"><circle cx="6" cy="6" r="4.600" fill="none" stroke="#143a10" stroke-width="1"/><line x1="6" y1="3" x2="6" y2="9" stroke="#143a10" stroke-width="1.200"/></svg></div>
<div style="left:19px;top:727px;width:30px;height:14px;background:#e2e2e2;border:1.500px solid #444;font-size:10px;font-weight:bold;line-height:11px;text-align:center">Solo</div>
<div style="left:50px;top:726px;width:14px;height:15px;background:#c4c4c4;border:1px solid #666;border-radius:3px"><svg style="left:0;top:0" width="12" height="13" viewBox="0 0 12 13"><circle cx="4" cy="4" r="1.700" fill="#eee" stroke="#222" stroke-width=".9"/><circle cx="4" cy="9" r="1.700" fill="#eee" stroke="#222" stroke-width=".9"/><rect x="7.500" y="3.300" width="1.300" height="1.300" fill="#222"/><rect x="9.700" y="3.300" width="1.300" height="1.300" fill="#222"/><rect x="7.500" y="8.300" width="1.300" height="1.300" fill="#222"/><rect x="9.700" y="8.300" width="1.300" height="1.300" fill="#222"/></svg></div>
<div class="pill" style="left:67px;width:90px">Take Snapshot...</div>
<div class="pill" style="left:160px;width:76px">Overlay List...</div>
<div class="pill" style="left:240px;width:63px">Clear Data</div>
<!-- resize grip -->
<svg style="left:1183px;top:730px" width="15" height="15" viewBox="0 0 15 15"><rect width="15" height="15" fill="#f6f6f6"/><g stroke="#8a8a8a" stroke-width="1"><line x1="3" y1="14" x2="14" y2="3"/><line x1="7" y1="14" x2="14" y2="7"/><line x1="11" y1="14" x2="14" y2="11"/></g></svg>
</body></html>
